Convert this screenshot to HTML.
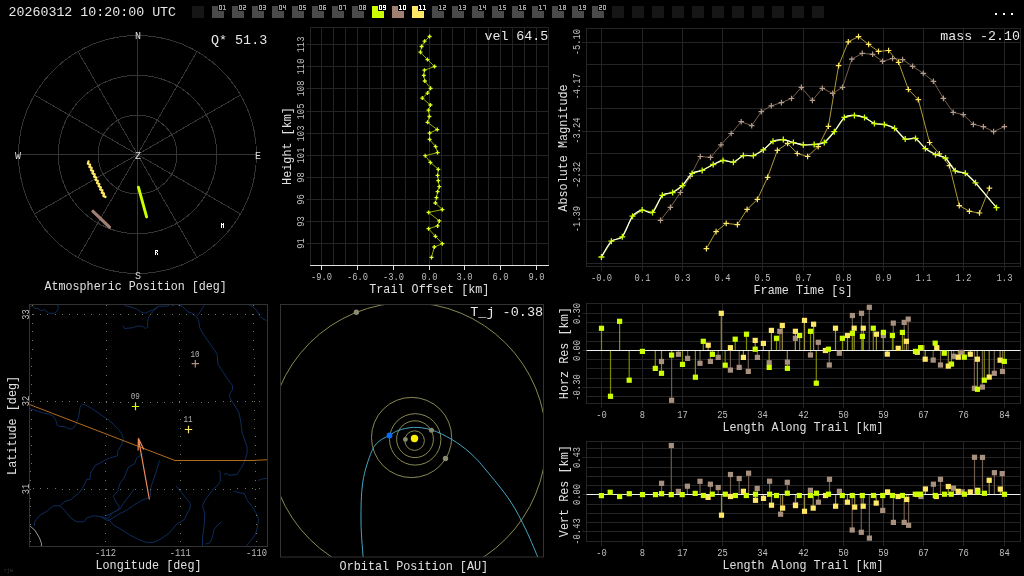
<!DOCTYPE html><html><head><meta charset="utf-8"><style>html,body{margin:0;padding:0;background:#000;overflow:hidden}svg{display:block;will-change:transform}</style></head><body>
<svg width="1024" height="576" viewBox="0 0 1024 576">
<rect width="1024" height="576" fill="#000"/>
<text transform="translate(8.50,16.00)" font-family="Liberation Mono" font-size="13.3" fill="#e8e8e8" text-anchor="start" font-weight="normal" >20260312 10:20:00 UTC</text>
<rect x="192" y="6" width="12" height="12" fill="#161616"/>
<rect x="212" y="6" width="12" height="12" fill="#4a4a4a"/>
<rect x="218" y="4" width="9" height="7" fill="#000"/>
<path d="M219,5h1v1h-1zM220,5h1v1h-1zM221,5h1v1h-1zM219,6h1v1h-1zM221,6h1v1h-1zM219,7h1v1h-1zM221,7h1v1h-1zM219,8h1v1h-1zM221,8h1v1h-1zM219,9h1v1h-1zM220,9h1v1h-1zM221,9h1v1h-1zM223,5h1v1h-1zM224,5h1v1h-1zM224,6h1v1h-1zM224,7h1v1h-1zM224,8h1v1h-1zM223,9h1v1h-1zM224,9h1v1h-1zM225,9h1v1h-1z" fill="#9a9a9a" shape-rendering="crispEdges"/>
<rect x="232" y="6" width="12" height="12" fill="#4a4a4a"/>
<rect x="238" y="4" width="9" height="7" fill="#000"/>
<path d="M239,5h1v1h-1zM240,5h1v1h-1zM241,5h1v1h-1zM239,6h1v1h-1zM241,6h1v1h-1zM239,7h1v1h-1zM241,7h1v1h-1zM239,8h1v1h-1zM241,8h1v1h-1zM239,9h1v1h-1zM240,9h1v1h-1zM241,9h1v1h-1zM243,5h1v1h-1zM244,5h1v1h-1zM245,5h1v1h-1zM245,6h1v1h-1zM243,7h1v1h-1zM244,7h1v1h-1zM245,7h1v1h-1zM243,8h1v1h-1zM243,9h1v1h-1zM244,9h1v1h-1zM245,9h1v1h-1z" fill="#9a9a9a" shape-rendering="crispEdges"/>
<rect x="252" y="6" width="12" height="12" fill="#4a4a4a"/>
<rect x="258" y="4" width="9" height="7" fill="#000"/>
<path d="M259,5h1v1h-1zM260,5h1v1h-1zM261,5h1v1h-1zM259,6h1v1h-1zM261,6h1v1h-1zM259,7h1v1h-1zM261,7h1v1h-1zM259,8h1v1h-1zM261,8h1v1h-1zM259,9h1v1h-1zM260,9h1v1h-1zM261,9h1v1h-1zM263,5h1v1h-1zM264,5h1v1h-1zM265,5h1v1h-1zM265,6h1v1h-1zM263,7h1v1h-1zM264,7h1v1h-1zM265,7h1v1h-1zM265,8h1v1h-1zM263,9h1v1h-1zM264,9h1v1h-1zM265,9h1v1h-1z" fill="#9a9a9a" shape-rendering="crispEdges"/>
<rect x="272" y="6" width="12" height="12" fill="#4a4a4a"/>
<rect x="278" y="4" width="9" height="7" fill="#000"/>
<path d="M279,5h1v1h-1zM280,5h1v1h-1zM281,5h1v1h-1zM279,6h1v1h-1zM281,6h1v1h-1zM279,7h1v1h-1zM281,7h1v1h-1zM279,8h1v1h-1zM281,8h1v1h-1zM279,9h1v1h-1zM280,9h1v1h-1zM281,9h1v1h-1zM283,5h1v1h-1zM285,5h1v1h-1zM283,6h1v1h-1zM285,6h1v1h-1zM283,7h1v1h-1zM284,7h1v1h-1zM285,7h1v1h-1zM285,8h1v1h-1zM285,9h1v1h-1z" fill="#9a9a9a" shape-rendering="crispEdges"/>
<rect x="292" y="6" width="12" height="12" fill="#4a4a4a"/>
<rect x="298" y="4" width="9" height="7" fill="#000"/>
<path d="M299,5h1v1h-1zM300,5h1v1h-1zM301,5h1v1h-1zM299,6h1v1h-1zM301,6h1v1h-1zM299,7h1v1h-1zM301,7h1v1h-1zM299,8h1v1h-1zM301,8h1v1h-1zM299,9h1v1h-1zM300,9h1v1h-1zM301,9h1v1h-1zM303,5h1v1h-1zM304,5h1v1h-1zM305,5h1v1h-1zM303,6h1v1h-1zM303,7h1v1h-1zM304,7h1v1h-1zM305,7h1v1h-1zM305,8h1v1h-1zM303,9h1v1h-1zM304,9h1v1h-1zM305,9h1v1h-1z" fill="#9a9a9a" shape-rendering="crispEdges"/>
<rect x="312" y="6" width="12" height="12" fill="#4a4a4a"/>
<rect x="318" y="4" width="9" height="7" fill="#000"/>
<path d="M319,5h1v1h-1zM320,5h1v1h-1zM321,5h1v1h-1zM319,6h1v1h-1zM321,6h1v1h-1zM319,7h1v1h-1zM321,7h1v1h-1zM319,8h1v1h-1zM321,8h1v1h-1zM319,9h1v1h-1zM320,9h1v1h-1zM321,9h1v1h-1zM323,5h1v1h-1zM324,5h1v1h-1zM325,5h1v1h-1zM323,6h1v1h-1zM323,7h1v1h-1zM324,7h1v1h-1zM325,7h1v1h-1zM323,8h1v1h-1zM325,8h1v1h-1zM323,9h1v1h-1zM324,9h1v1h-1zM325,9h1v1h-1z" fill="#9a9a9a" shape-rendering="crispEdges"/>
<rect x="332" y="6" width="12" height="12" fill="#4a4a4a"/>
<rect x="338" y="4" width="9" height="7" fill="#000"/>
<path d="M339,5h1v1h-1zM340,5h1v1h-1zM341,5h1v1h-1zM339,6h1v1h-1zM341,6h1v1h-1zM339,7h1v1h-1zM341,7h1v1h-1zM339,8h1v1h-1zM341,8h1v1h-1zM339,9h1v1h-1zM340,9h1v1h-1zM341,9h1v1h-1zM343,5h1v1h-1zM344,5h1v1h-1zM345,5h1v1h-1zM345,6h1v1h-1zM345,7h1v1h-1zM345,8h1v1h-1zM345,9h1v1h-1z" fill="#9a9a9a" shape-rendering="crispEdges"/>
<rect x="352" y="6" width="12" height="12" fill="#4a4a4a"/>
<rect x="358" y="4" width="9" height="7" fill="#000"/>
<path d="M359,5h1v1h-1zM360,5h1v1h-1zM361,5h1v1h-1zM359,6h1v1h-1zM361,6h1v1h-1zM359,7h1v1h-1zM361,7h1v1h-1zM359,8h1v1h-1zM361,8h1v1h-1zM359,9h1v1h-1zM360,9h1v1h-1zM361,9h1v1h-1zM363,5h1v1h-1zM364,5h1v1h-1zM365,5h1v1h-1zM363,6h1v1h-1zM365,6h1v1h-1zM363,7h1v1h-1zM364,7h1v1h-1zM365,7h1v1h-1zM363,8h1v1h-1zM365,8h1v1h-1zM363,9h1v1h-1zM364,9h1v1h-1zM365,9h1v1h-1z" fill="#9a9a9a" shape-rendering="crispEdges"/>
<rect x="372" y="6" width="12" height="12" fill="#ccff00"/>
<rect x="378" y="4" width="9" height="7" fill="#000"/>
<path d="M379,5h1v1h-1zM380,5h1v1h-1zM381,5h1v1h-1zM379,6h1v1h-1zM381,6h1v1h-1zM379,7h1v1h-1zM381,7h1v1h-1zM379,8h1v1h-1zM381,8h1v1h-1zM379,9h1v1h-1zM380,9h1v1h-1zM381,9h1v1h-1zM383,5h1v1h-1zM384,5h1v1h-1zM385,5h1v1h-1zM383,6h1v1h-1zM385,6h1v1h-1zM383,7h1v1h-1zM384,7h1v1h-1zM385,7h1v1h-1zM385,8h1v1h-1zM383,9h1v1h-1zM384,9h1v1h-1zM385,9h1v1h-1z" fill="#ffffff" shape-rendering="crispEdges"/>
<rect x="392" y="6" width="12" height="12" fill="#a08070"/>
<rect x="398" y="4" width="9" height="7" fill="#000"/>
<path d="M399,5h1v1h-1zM400,5h1v1h-1zM400,6h1v1h-1zM400,7h1v1h-1zM400,8h1v1h-1zM399,9h1v1h-1zM400,9h1v1h-1zM401,9h1v1h-1zM403,5h1v1h-1zM404,5h1v1h-1zM405,5h1v1h-1zM403,6h1v1h-1zM405,6h1v1h-1zM403,7h1v1h-1zM405,7h1v1h-1zM403,8h1v1h-1zM405,8h1v1h-1zM403,9h1v1h-1zM404,9h1v1h-1zM405,9h1v1h-1z" fill="#ffffff" shape-rendering="crispEdges"/>
<rect x="412" y="6" width="12" height="12" fill="#ffe866"/>
<rect x="418" y="4" width="9" height="7" fill="#000"/>
<path d="M419,5h1v1h-1zM420,5h1v1h-1zM420,6h1v1h-1zM420,7h1v1h-1zM420,8h1v1h-1zM419,9h1v1h-1zM420,9h1v1h-1zM421,9h1v1h-1zM423,5h1v1h-1zM424,5h1v1h-1zM424,6h1v1h-1zM424,7h1v1h-1zM424,8h1v1h-1zM423,9h1v1h-1zM424,9h1v1h-1zM425,9h1v1h-1z" fill="#ffffff" shape-rendering="crispEdges"/>
<rect x="432" y="6" width="12" height="12" fill="#4a4a4a"/>
<rect x="438" y="4" width="9" height="7" fill="#000"/>
<path d="M439,5h1v1h-1zM440,5h1v1h-1zM440,6h1v1h-1zM440,7h1v1h-1zM440,8h1v1h-1zM439,9h1v1h-1zM440,9h1v1h-1zM441,9h1v1h-1zM443,5h1v1h-1zM444,5h1v1h-1zM445,5h1v1h-1zM445,6h1v1h-1zM443,7h1v1h-1zM444,7h1v1h-1zM445,7h1v1h-1zM443,8h1v1h-1zM443,9h1v1h-1zM444,9h1v1h-1zM445,9h1v1h-1z" fill="#9a9a9a" shape-rendering="crispEdges"/>
<rect x="452" y="6" width="12" height="12" fill="#4a4a4a"/>
<rect x="458" y="4" width="9" height="7" fill="#000"/>
<path d="M459,5h1v1h-1zM460,5h1v1h-1zM460,6h1v1h-1zM460,7h1v1h-1zM460,8h1v1h-1zM459,9h1v1h-1zM460,9h1v1h-1zM461,9h1v1h-1zM463,5h1v1h-1zM464,5h1v1h-1zM465,5h1v1h-1zM465,6h1v1h-1zM463,7h1v1h-1zM464,7h1v1h-1zM465,7h1v1h-1zM465,8h1v1h-1zM463,9h1v1h-1zM464,9h1v1h-1zM465,9h1v1h-1z" fill="#9a9a9a" shape-rendering="crispEdges"/>
<rect x="472" y="6" width="12" height="12" fill="#4a4a4a"/>
<rect x="478" y="4" width="9" height="7" fill="#000"/>
<path d="M479,5h1v1h-1zM480,5h1v1h-1zM480,6h1v1h-1zM480,7h1v1h-1zM480,8h1v1h-1zM479,9h1v1h-1zM480,9h1v1h-1zM481,9h1v1h-1zM483,5h1v1h-1zM485,5h1v1h-1zM483,6h1v1h-1zM485,6h1v1h-1zM483,7h1v1h-1zM484,7h1v1h-1zM485,7h1v1h-1zM485,8h1v1h-1zM485,9h1v1h-1z" fill="#9a9a9a" shape-rendering="crispEdges"/>
<rect x="492" y="6" width="12" height="12" fill="#4a4a4a"/>
<rect x="498" y="4" width="9" height="7" fill="#000"/>
<path d="M499,5h1v1h-1zM500,5h1v1h-1zM500,6h1v1h-1zM500,7h1v1h-1zM500,8h1v1h-1zM499,9h1v1h-1zM500,9h1v1h-1zM501,9h1v1h-1zM503,5h1v1h-1zM504,5h1v1h-1zM505,5h1v1h-1zM503,6h1v1h-1zM503,7h1v1h-1zM504,7h1v1h-1zM505,7h1v1h-1zM505,8h1v1h-1zM503,9h1v1h-1zM504,9h1v1h-1zM505,9h1v1h-1z" fill="#9a9a9a" shape-rendering="crispEdges"/>
<rect x="512" y="6" width="12" height="12" fill="#4a4a4a"/>
<rect x="518" y="4" width="9" height="7" fill="#000"/>
<path d="M519,5h1v1h-1zM520,5h1v1h-1zM520,6h1v1h-1zM520,7h1v1h-1zM520,8h1v1h-1zM519,9h1v1h-1zM520,9h1v1h-1zM521,9h1v1h-1zM523,5h1v1h-1zM524,5h1v1h-1zM525,5h1v1h-1zM523,6h1v1h-1zM523,7h1v1h-1zM524,7h1v1h-1zM525,7h1v1h-1zM523,8h1v1h-1zM525,8h1v1h-1zM523,9h1v1h-1zM524,9h1v1h-1zM525,9h1v1h-1z" fill="#9a9a9a" shape-rendering="crispEdges"/>
<rect x="532" y="6" width="12" height="12" fill="#4a4a4a"/>
<rect x="538" y="4" width="9" height="7" fill="#000"/>
<path d="M539,5h1v1h-1zM540,5h1v1h-1zM540,6h1v1h-1zM540,7h1v1h-1zM540,8h1v1h-1zM539,9h1v1h-1zM540,9h1v1h-1zM541,9h1v1h-1zM543,5h1v1h-1zM544,5h1v1h-1zM545,5h1v1h-1zM545,6h1v1h-1zM545,7h1v1h-1zM545,8h1v1h-1zM545,9h1v1h-1z" fill="#9a9a9a" shape-rendering="crispEdges"/>
<rect x="552" y="6" width="12" height="12" fill="#4a4a4a"/>
<rect x="558" y="4" width="9" height="7" fill="#000"/>
<path d="M559,5h1v1h-1zM560,5h1v1h-1zM560,6h1v1h-1zM560,7h1v1h-1zM560,8h1v1h-1zM559,9h1v1h-1zM560,9h1v1h-1zM561,9h1v1h-1zM563,5h1v1h-1zM564,5h1v1h-1zM565,5h1v1h-1zM563,6h1v1h-1zM565,6h1v1h-1zM563,7h1v1h-1zM564,7h1v1h-1zM565,7h1v1h-1zM563,8h1v1h-1zM565,8h1v1h-1zM563,9h1v1h-1zM564,9h1v1h-1zM565,9h1v1h-1z" fill="#9a9a9a" shape-rendering="crispEdges"/>
<rect x="572" y="6" width="12" height="12" fill="#4a4a4a"/>
<rect x="578" y="4" width="9" height="7" fill="#000"/>
<path d="M579,5h1v1h-1zM580,5h1v1h-1zM580,6h1v1h-1zM580,7h1v1h-1zM580,8h1v1h-1zM579,9h1v1h-1zM580,9h1v1h-1zM581,9h1v1h-1zM583,5h1v1h-1zM584,5h1v1h-1zM585,5h1v1h-1zM583,6h1v1h-1zM585,6h1v1h-1zM583,7h1v1h-1zM584,7h1v1h-1zM585,7h1v1h-1zM585,8h1v1h-1zM583,9h1v1h-1zM584,9h1v1h-1zM585,9h1v1h-1z" fill="#9a9a9a" shape-rendering="crispEdges"/>
<rect x="592" y="6" width="12" height="12" fill="#4a4a4a"/>
<rect x="598" y="4" width="9" height="7" fill="#000"/>
<path d="M599,5h1v1h-1zM600,5h1v1h-1zM601,5h1v1h-1zM601,6h1v1h-1zM599,7h1v1h-1zM600,7h1v1h-1zM601,7h1v1h-1zM599,8h1v1h-1zM599,9h1v1h-1zM600,9h1v1h-1zM601,9h1v1h-1zM603,5h1v1h-1zM604,5h1v1h-1zM605,5h1v1h-1zM603,6h1v1h-1zM605,6h1v1h-1zM603,7h1v1h-1zM605,7h1v1h-1zM603,8h1v1h-1zM605,8h1v1h-1zM603,9h1v1h-1zM604,9h1v1h-1zM605,9h1v1h-1z" fill="#9a9a9a" shape-rendering="crispEdges"/>
<rect x="612" y="6" width="12" height="12" fill="#161616"/>
<rect x="632" y="6" width="12" height="12" fill="#161616"/>
<rect x="652" y="6" width="12" height="12" fill="#161616"/>
<rect x="672" y="6" width="12" height="12" fill="#161616"/>
<rect x="692" y="6" width="12" height="12" fill="#161616"/>
<rect x="712" y="6" width="12" height="12" fill="#161616"/>
<rect x="732" y="6" width="12" height="12" fill="#161616"/>
<rect x="752" y="6" width="12" height="12" fill="#161616"/>
<rect x="772" y="6" width="12" height="12" fill="#161616"/>
<rect x="792" y="6" width="12" height="12" fill="#161616"/>
<rect x="812" y="6" width="12" height="12" fill="#161616"/>
<rect x="995" y="13" width="2" height="2" fill="#fff"/>
<rect x="1003" y="13" width="2" height="2" fill="#fff"/>
<rect x="1011" y="13" width="2" height="2" fill="#fff"/>
<circle cx="137.5" cy="154.5" r="39.5" fill="none" stroke="#353535" stroke-width="1" shape-rendering="crispEdges"/>
<circle cx="137.5" cy="154.5" r="79.3" fill="none" stroke="#353535" stroke-width="1" shape-rendering="crispEdges"/>
<circle cx="137.5" cy="154.5" r="119" fill="none" stroke="#353535" stroke-width="1" shape-rendering="crispEdges"/>
<line x1="137.50" y1="154.50" x2="137.50" y2="35.50" stroke="#353535" stroke-width="1" shape-rendering="crispEdges"/>
<line x1="137.50" y1="154.50" x2="197.00" y2="51.44" stroke="#353535" stroke-width="1" shape-rendering="crispEdges"/>
<line x1="137.50" y1="154.50" x2="240.56" y2="95.00" stroke="#353535" stroke-width="1" shape-rendering="crispEdges"/>
<line x1="137.50" y1="154.50" x2="256.50" y2="154.50" stroke="#353535" stroke-width="1" shape-rendering="crispEdges"/>
<line x1="137.50" y1="154.50" x2="240.56" y2="214.00" stroke="#353535" stroke-width="1" shape-rendering="crispEdges"/>
<line x1="137.50" y1="154.50" x2="197.00" y2="257.56" stroke="#353535" stroke-width="1" shape-rendering="crispEdges"/>
<line x1="137.50" y1="154.50" x2="137.50" y2="273.50" stroke="#353535" stroke-width="1" shape-rendering="crispEdges"/>
<line x1="137.50" y1="154.50" x2="78.00" y2="257.56" stroke="#353535" stroke-width="1" shape-rendering="crispEdges"/>
<line x1="137.50" y1="154.50" x2="34.44" y2="214.00" stroke="#353535" stroke-width="1" shape-rendering="crispEdges"/>
<line x1="137.50" y1="154.50" x2="18.50" y2="154.50" stroke="#353535" stroke-width="1" shape-rendering="crispEdges"/>
<line x1="137.50" y1="154.50" x2="34.44" y2="95.00" stroke="#353535" stroke-width="1" shape-rendering="crispEdges"/>
<line x1="137.50" y1="154.50" x2="78.00" y2="51.44" stroke="#353535" stroke-width="1" shape-rendering="crispEdges"/>
<text transform="translate(138.00,39.00) scale(1,1.1)" font-family="Liberation Mono" font-size="10" fill="#dddddd" text-anchor="middle" font-weight="normal" >N</text>
<text transform="translate(138.00,279.00) scale(1,1.1)" font-family="Liberation Mono" font-size="10" fill="#dddddd" text-anchor="middle" font-weight="normal" >S</text>
<text transform="translate(18.00,159.00) scale(1,1.1)" font-family="Liberation Mono" font-size="10" fill="#dddddd" text-anchor="middle" font-weight="normal" >W</text>
<text transform="translate(258.00,159.00) scale(1,1.1)" font-family="Liberation Mono" font-size="10" fill="#dddddd" text-anchor="middle" font-weight="normal" >E</text>
<text transform="translate(138.00,159.00) scale(1,1.1)" font-family="Liberation Mono" font-size="10" fill="#dddddd" text-anchor="middle" font-weight="normal" >Z</text>
<polyline points="88.48,161.48 87.90,163.73 90.02,164.69 89.44,166.95 91.57,167.91 90.99,170.17 93.11,171.13 92.53,173.39 94.66,174.35 94.08,176.61 96.20,177.57 95.62,179.82 97.75,180.78 97.17,183.04 99.29,184.00 98.71,186.26 100.84,187.22 100.26,189.48 102.39,190.44 101.81,192.70 103.93,193.66 103.35,195.92 105.48,196.88" fill="none" stroke="#ffe866" stroke-width="2.4" stroke-linejoin="round" stroke-linecap="round"/>
<line x1="138.40" y1="187.20" x2="146.60" y2="216.90" stroke="#ccff00" stroke-width="2.9" stroke-linecap="round"/>
<line x1="93.00" y1="211.30" x2="109.50" y2="227.20" stroke="#a08070" stroke-width="3.2" stroke-linecap="round"/>
<path d="M221,223h1v1h-1zM223,223h1v1h-1zM221,224h1v1h-1zM222,224h1v1h-1zM223,224h1v1h-1zM221,225h1v1h-1zM223,225h1v1h-1zM221,226h1v1h-1zM223,226h1v1h-1zM221,227h1v1h-1zM223,227h1v1h-1z" fill="#ffffff" shape-rendering="crispEdges"/>
<path d="M155,250h1v1h-1zM156,250h1v1h-1zM157,250h1v1h-1zM155,251h1v1h-1zM157,251h1v1h-1zM155,252h1v1h-1zM156,252h1v1h-1zM155,253h1v1h-1zM157,253h1v1h-1zM155,254h1v1h-1zM157,254h1v1h-1z" fill="#ffffff" shape-rendering="crispEdges"/>
<text transform="translate(267.20,43.70)" font-family="Liberation Mono" font-size="13.4" fill="#e8e8e8" text-anchor="end" font-weight="normal" >Q* 51.3</text>
<text transform="translate(135.70,290.00) scale(1,1.1)" font-family="Liberation Mono" font-size="11.7" fill="#e0e0e0" text-anchor="middle" font-weight="normal" >Atmospheric Position [deg]</text>
<line x1="321.50" y1="27.50" x2="321.50" y2="265.00" stroke="#242424" stroke-width="1" />
<line x1="333.50" y1="27.50" x2="333.50" y2="265.00" stroke="#242424" stroke-width="1" />
<line x1="345.50" y1="27.50" x2="345.50" y2="265.00" stroke="#242424" stroke-width="1" />
<line x1="357.50" y1="27.50" x2="357.50" y2="265.00" stroke="#242424" stroke-width="1" />
<line x1="369.50" y1="27.50" x2="369.50" y2="265.00" stroke="#242424" stroke-width="1" />
<line x1="381.50" y1="27.50" x2="381.50" y2="265.00" stroke="#242424" stroke-width="1" />
<line x1="393.50" y1="27.50" x2="393.50" y2="265.00" stroke="#242424" stroke-width="1" />
<line x1="405.50" y1="27.50" x2="405.50" y2="265.00" stroke="#242424" stroke-width="1" />
<line x1="417.50" y1="27.50" x2="417.50" y2="265.00" stroke="#242424" stroke-width="1" />
<line x1="429.50" y1="27.50" x2="429.50" y2="265.00" stroke="#242424" stroke-width="1" />
<line x1="441.50" y1="27.50" x2="441.50" y2="265.00" stroke="#242424" stroke-width="1" />
<line x1="452.50" y1="27.50" x2="452.50" y2="265.00" stroke="#242424" stroke-width="1" />
<line x1="464.50" y1="27.50" x2="464.50" y2="265.00" stroke="#242424" stroke-width="1" />
<line x1="476.50" y1="27.50" x2="476.50" y2="265.00" stroke="#242424" stroke-width="1" />
<line x1="488.50" y1="27.50" x2="488.50" y2="265.00" stroke="#242424" stroke-width="1" />
<line x1="500.50" y1="27.50" x2="500.50" y2="265.00" stroke="#242424" stroke-width="1" />
<line x1="512.50" y1="27.50" x2="512.50" y2="265.00" stroke="#242424" stroke-width="1" />
<line x1="524.50" y1="27.50" x2="524.50" y2="265.00" stroke="#242424" stroke-width="1" />
<line x1="536.50" y1="27.50" x2="536.50" y2="265.00" stroke="#242424" stroke-width="1" />
<line x1="306.50" y1="44.50" x2="548.50" y2="44.50" stroke="#242424" stroke-width="1" />
<line x1="306.50" y1="66.50" x2="548.50" y2="66.50" stroke="#242424" stroke-width="1" />
<line x1="306.50" y1="88.50" x2="548.50" y2="88.50" stroke="#242424" stroke-width="1" />
<line x1="306.50" y1="111.50" x2="548.50" y2="111.50" stroke="#242424" stroke-width="1" />
<line x1="306.50" y1="133.50" x2="548.50" y2="133.50" stroke="#242424" stroke-width="1" />
<line x1="306.50" y1="155.50" x2="548.50" y2="155.50" stroke="#242424" stroke-width="1" />
<line x1="306.50" y1="177.50" x2="548.50" y2="177.50" stroke="#242424" stroke-width="1" />
<line x1="306.50" y1="199.50" x2="548.50" y2="199.50" stroke="#242424" stroke-width="1" />
<line x1="306.50" y1="221.50" x2="548.50" y2="221.50" stroke="#242424" stroke-width="1" />
<line x1="306.50" y1="243.50" x2="548.50" y2="243.50" stroke="#242424" stroke-width="1" />
<path d="M310.5,265.5 V27.5 H548.5 V265.5" fill="none" stroke="#242424" stroke-width="1"/>
<line x1="310.00" y1="265.50" x2="549.00" y2="265.50" stroke="#e0e0e0" stroke-width="1" />
<line x1="321.50" y1="265.50" x2="321.50" y2="270.00" stroke="#e0e0e0" stroke-width="1" />
<text transform="translate(321.50,280.20) scale(1,1.14)" font-family="Liberation Mono" font-size="8.8" fill="#bdbdbd" text-anchor="middle" font-weight="normal" >-9.0</text>
<line x1="357.50" y1="265.50" x2="357.50" y2="270.00" stroke="#e0e0e0" stroke-width="1" />
<text transform="translate(357.50,280.20) scale(1,1.14)" font-family="Liberation Mono" font-size="8.8" fill="#bdbdbd" text-anchor="middle" font-weight="normal" >-6.0</text>
<line x1="393.50" y1="265.50" x2="393.50" y2="270.00" stroke="#e0e0e0" stroke-width="1" />
<text transform="translate(393.50,280.20) scale(1,1.14)" font-family="Liberation Mono" font-size="8.8" fill="#bdbdbd" text-anchor="middle" font-weight="normal" >-3.0</text>
<line x1="429.50" y1="265.50" x2="429.50" y2="270.00" stroke="#e0e0e0" stroke-width="1" />
<text transform="translate(429.50,280.20) scale(1,1.14)" font-family="Liberation Mono" font-size="8.8" fill="#bdbdbd" text-anchor="middle" font-weight="normal" >0.0</text>
<line x1="464.50" y1="265.50" x2="464.50" y2="270.00" stroke="#e0e0e0" stroke-width="1" />
<text transform="translate(464.50,280.20) scale(1,1.14)" font-family="Liberation Mono" font-size="8.8" fill="#bdbdbd" text-anchor="middle" font-weight="normal" >3.0</text>
<line x1="500.50" y1="265.50" x2="500.50" y2="270.00" stroke="#e0e0e0" stroke-width="1" />
<text transform="translate(500.50,280.20) scale(1,1.14)" font-family="Liberation Mono" font-size="8.8" fill="#bdbdbd" text-anchor="middle" font-weight="normal" >6.0</text>
<line x1="536.50" y1="265.50" x2="536.50" y2="270.00" stroke="#e0e0e0" stroke-width="1" />
<text transform="translate(536.50,280.20) scale(1,1.14)" font-family="Liberation Mono" font-size="8.8" fill="#bdbdbd" text-anchor="middle" font-weight="normal" >9.0</text>
<text transform="translate(304.30,44.50) rotate(-90) scale(1,1.14)" font-family="Liberation Mono" font-size="8.8" fill="#bdbdbd" text-anchor="middle" font-weight="normal" >113</text>
<text transform="translate(304.30,66.50) rotate(-90) scale(1,1.14)" font-family="Liberation Mono" font-size="8.8" fill="#bdbdbd" text-anchor="middle" font-weight="normal" >110</text>
<text transform="translate(304.30,88.50) rotate(-90) scale(1,1.14)" font-family="Liberation Mono" font-size="8.8" fill="#bdbdbd" text-anchor="middle" font-weight="normal" >108</text>
<text transform="translate(304.30,111.50) rotate(-90) scale(1,1.14)" font-family="Liberation Mono" font-size="8.8" fill="#bdbdbd" text-anchor="middle" font-weight="normal" >105</text>
<text transform="translate(304.30,133.50) rotate(-90) scale(1,1.14)" font-family="Liberation Mono" font-size="8.8" fill="#bdbdbd" text-anchor="middle" font-weight="normal" >103</text>
<text transform="translate(304.30,155.50) rotate(-90) scale(1,1.14)" font-family="Liberation Mono" font-size="8.8" fill="#bdbdbd" text-anchor="middle" font-weight="normal" >101</text>
<text transform="translate(304.30,177.50) rotate(-90) scale(1,1.14)" font-family="Liberation Mono" font-size="8.8" fill="#bdbdbd" text-anchor="middle" font-weight="normal" >98</text>
<text transform="translate(304.30,199.50) rotate(-90) scale(1,1.14)" font-family="Liberation Mono" font-size="8.8" fill="#bdbdbd" text-anchor="middle" font-weight="normal" >96</text>
<text transform="translate(304.30,221.50) rotate(-90) scale(1,1.14)" font-family="Liberation Mono" font-size="8.8" fill="#bdbdbd" text-anchor="middle" font-weight="normal" >93</text>
<text transform="translate(304.30,243.50) rotate(-90) scale(1,1.14)" font-family="Liberation Mono" font-size="8.8" fill="#bdbdbd" text-anchor="middle" font-weight="normal" >91</text>
<text transform="translate(291.30,146.00) rotate(-90) scale(1,1.1)" font-family="Liberation Mono" font-size="11.8" fill="#e0e0e0" text-anchor="middle" font-weight="normal" >Height [km]</text>
<text transform="translate(429.30,292.50) scale(1,1.1)" font-family="Liberation Mono" font-size="11.8" fill="#e0e0e0" text-anchor="middle" font-weight="normal" >Trail Offset [km]</text>
<polyline points="429.60,36.50 424.60,41.20 421.60,46.50 420.40,52.20 427.50,59.60 434.60,66.50 424.40,70.20 423.80,75.40 424.80,81.00 430.60,88.30 427.50,93.10 422.30,98.10 430.40,105.00 428.50,110.20 429.40,116.50 427.50,122.30 437.30,129.60 429.60,133.10 429.60,139.40 435.60,146.60 437.60,152.60 425.20,155.70 430.40,162.40 438.30,169.30 437.60,175.40 438.30,180.70 439.30,186.70 437.60,191.70 436.50,197.60 435.40,203.00 442.40,209.60 428.50,212.40 439.30,220.90 437.60,225.90 428.50,228.70 435.40,236.30 442.40,243.70 434.30,247.00 431.50,257.40" fill="none" stroke="#9aa800" stroke-width="1" stroke-linejoin="round" />
<path d="M427.60,36.50H431.60M429.60,34.50V38.50" stroke="#ddff22" stroke-width="1.3"/>
<path d="M422.60,41.20H426.60M424.60,39.20V43.20" stroke="#ddff22" stroke-width="1.3"/>
<path d="M419.60,46.50H423.60M421.60,44.50V48.50" stroke="#ddff22" stroke-width="1.3"/>
<path d="M418.40,52.20H422.40M420.40,50.20V54.20" stroke="#ddff22" stroke-width="1.3"/>
<path d="M425.50,59.60H429.50M427.50,57.60V61.60" stroke="#ddff22" stroke-width="1.3"/>
<path d="M432.60,66.50H436.60M434.60,64.50V68.50" stroke="#ddff22" stroke-width="1.3"/>
<path d="M422.40,70.20H426.40M424.40,68.20V72.20" stroke="#ddff22" stroke-width="1.3"/>
<path d="M421.80,75.40H425.80M423.80,73.40V77.40" stroke="#ddff22" stroke-width="1.3"/>
<path d="M422.80,81.00H426.80M424.80,79.00V83.00" stroke="#ddff22" stroke-width="1.3"/>
<path d="M428.60,88.30H432.60M430.60,86.30V90.30" stroke="#ddff22" stroke-width="1.3"/>
<path d="M425.50,93.10H429.50M427.50,91.10V95.10" stroke="#ddff22" stroke-width="1.3"/>
<path d="M420.30,98.10H424.30M422.30,96.10V100.10" stroke="#ddff22" stroke-width="1.3"/>
<path d="M428.40,105.00H432.40M430.40,103.00V107.00" stroke="#ddff22" stroke-width="1.3"/>
<path d="M426.50,110.20H430.50M428.50,108.20V112.20" stroke="#ddff22" stroke-width="1.3"/>
<path d="M427.40,116.50H431.40M429.40,114.50V118.50" stroke="#ddff22" stroke-width="1.3"/>
<path d="M425.50,122.30H429.50M427.50,120.30V124.30" stroke="#ddff22" stroke-width="1.3"/>
<path d="M435.30,129.60H439.30M437.30,127.60V131.60" stroke="#ddff22" stroke-width="1.3"/>
<path d="M427.60,133.10H431.60M429.60,131.10V135.10" stroke="#ddff22" stroke-width="1.3"/>
<path d="M427.60,139.40H431.60M429.60,137.40V141.40" stroke="#ddff22" stroke-width="1.3"/>
<path d="M433.60,146.60H437.60M435.60,144.60V148.60" stroke="#ddff22" stroke-width="1.3"/>
<path d="M435.60,152.60H439.60M437.60,150.60V154.60" stroke="#ddff22" stroke-width="1.3"/>
<path d="M423.20,155.70H427.20M425.20,153.70V157.70" stroke="#ddff22" stroke-width="1.3"/>
<path d="M428.40,162.40H432.40M430.40,160.40V164.40" stroke="#ddff22" stroke-width="1.3"/>
<path d="M436.30,169.30H440.30M438.30,167.30V171.30" stroke="#ddff22" stroke-width="1.3"/>
<path d="M435.60,175.40H439.60M437.60,173.40V177.40" stroke="#ddff22" stroke-width="1.3"/>
<path d="M436.30,180.70H440.30M438.30,178.70V182.70" stroke="#ddff22" stroke-width="1.3"/>
<path d="M437.30,186.70H441.30M439.30,184.70V188.70" stroke="#ddff22" stroke-width="1.3"/>
<path d="M435.60,191.70H439.60M437.60,189.70V193.70" stroke="#ddff22" stroke-width="1.3"/>
<path d="M434.50,197.60H438.50M436.50,195.60V199.60" stroke="#ddff22" stroke-width="1.3"/>
<path d="M433.40,203.00H437.40M435.40,201.00V205.00" stroke="#ddff22" stroke-width="1.3"/>
<path d="M440.40,209.60H444.40M442.40,207.60V211.60" stroke="#ddff22" stroke-width="1.3"/>
<path d="M426.50,212.40H430.50M428.50,210.40V214.40" stroke="#ddff22" stroke-width="1.3"/>
<path d="M437.30,220.90H441.30M439.30,218.90V222.90" stroke="#ddff22" stroke-width="1.3"/>
<path d="M435.60,225.90H439.60M437.60,223.90V227.90" stroke="#ddff22" stroke-width="1.3"/>
<path d="M426.50,228.70H430.50M428.50,226.70V230.70" stroke="#ddff22" stroke-width="1.3"/>
<path d="M433.40,236.30H437.40M435.40,234.30V238.30" stroke="#ddff22" stroke-width="1.3"/>
<path d="M440.40,243.70H444.40M442.40,241.70V245.70" stroke="#ddff22" stroke-width="1.3"/>
<path d="M432.30,247.00H436.30M434.30,245.00V249.00" stroke="#ddff22" stroke-width="1.3"/>
<path d="M429.50,257.40H433.50M431.50,255.40V259.40" stroke="#ddff22" stroke-width="1.3"/>
<text transform="translate(548.30,40.20)" font-family="Liberation Mono" font-size="13.3" fill="#e8e8e8" text-anchor="end" font-weight="normal" >vel 64.5</text>
<line x1="601.50" y1="28.50" x2="601.50" y2="270.50" stroke="#242424" stroke-width="1" />
<line x1="642.50" y1="28.50" x2="642.50" y2="270.50" stroke="#242424" stroke-width="1" />
<line x1="682.50" y1="28.50" x2="682.50" y2="270.50" stroke="#242424" stroke-width="1" />
<line x1="722.50" y1="28.50" x2="722.50" y2="270.50" stroke="#242424" stroke-width="1" />
<line x1="762.50" y1="28.50" x2="762.50" y2="270.50" stroke="#242424" stroke-width="1" />
<line x1="803.50" y1="28.50" x2="803.50" y2="270.50" stroke="#242424" stroke-width="1" />
<line x1="843.50" y1="28.50" x2="843.50" y2="270.50" stroke="#242424" stroke-width="1" />
<line x1="883.50" y1="28.50" x2="883.50" y2="270.50" stroke="#242424" stroke-width="1" />
<line x1="923.50" y1="28.50" x2="923.50" y2="270.50" stroke="#242424" stroke-width="1" />
<line x1="963.50" y1="28.50" x2="963.50" y2="270.50" stroke="#242424" stroke-width="1" />
<line x1="1004.50" y1="28.50" x2="1004.50" y2="270.50" stroke="#242424" stroke-width="1" />
<line x1="586.50" y1="42.50" x2="1020.50" y2="42.50" stroke="#242424" stroke-width="1" />
<line x1="586.50" y1="64.50" x2="1020.50" y2="64.50" stroke="#242424" stroke-width="1" />
<line x1="586.50" y1="86.50" x2="1020.50" y2="86.50" stroke="#242424" stroke-width="1" />
<line x1="586.50" y1="108.50" x2="1020.50" y2="108.50" stroke="#242424" stroke-width="1" />
<line x1="586.50" y1="131.50" x2="1020.50" y2="131.50" stroke="#242424" stroke-width="1" />
<line x1="586.50" y1="153.50" x2="1020.50" y2="153.50" stroke="#242424" stroke-width="1" />
<line x1="586.50" y1="175.50" x2="1020.50" y2="175.50" stroke="#242424" stroke-width="1" />
<line x1="586.50" y1="197.50" x2="1020.50" y2="197.50" stroke="#242424" stroke-width="1" />
<line x1="586.50" y1="219.50" x2="1020.50" y2="219.50" stroke="#242424" stroke-width="1" />
<line x1="586.50" y1="241.50" x2="1020.50" y2="241.50" stroke="#242424" stroke-width="1" />
<line x1="586.50" y1="263.50" x2="1020.50" y2="263.50" stroke="#242424" stroke-width="1" />
<rect x="586.5" y="28.5" width="434.0" height="238.0" fill="none" stroke="#242424" stroke-width="1"/>
<text transform="translate(601.50,281.20) scale(1,1.14)" font-family="Liberation Mono" font-size="8.8" fill="#bdbdbd" text-anchor="middle" font-weight="normal" >-0.0</text>
<text transform="translate(642.50,281.20) scale(1,1.14)" font-family="Liberation Mono" font-size="8.8" fill="#bdbdbd" text-anchor="middle" font-weight="normal" >0.1</text>
<text transform="translate(682.50,281.20) scale(1,1.14)" font-family="Liberation Mono" font-size="8.8" fill="#bdbdbd" text-anchor="middle" font-weight="normal" >0.3</text>
<text transform="translate(722.50,281.20) scale(1,1.14)" font-family="Liberation Mono" font-size="8.8" fill="#bdbdbd" text-anchor="middle" font-weight="normal" >0.4</text>
<text transform="translate(762.50,281.20) scale(1,1.14)" font-family="Liberation Mono" font-size="8.8" fill="#bdbdbd" text-anchor="middle" font-weight="normal" >0.5</text>
<text transform="translate(803.50,281.20) scale(1,1.14)" font-family="Liberation Mono" font-size="8.8" fill="#bdbdbd" text-anchor="middle" font-weight="normal" >0.7</text>
<text transform="translate(843.50,281.20) scale(1,1.14)" font-family="Liberation Mono" font-size="8.8" fill="#bdbdbd" text-anchor="middle" font-weight="normal" >0.8</text>
<text transform="translate(883.50,281.20) scale(1,1.14)" font-family="Liberation Mono" font-size="8.8" fill="#bdbdbd" text-anchor="middle" font-weight="normal" >0.9</text>
<text transform="translate(923.50,281.20) scale(1,1.14)" font-family="Liberation Mono" font-size="8.8" fill="#bdbdbd" text-anchor="middle" font-weight="normal" >1.1</text>
<text transform="translate(963.50,281.20) scale(1,1.14)" font-family="Liberation Mono" font-size="8.8" fill="#bdbdbd" text-anchor="middle" font-weight="normal" >1.2</text>
<text transform="translate(1004.50,281.20) scale(1,1.14)" font-family="Liberation Mono" font-size="8.8" fill="#bdbdbd" text-anchor="middle" font-weight="normal" >1.3</text>
<line x1="582.00" y1="42.50" x2="586.50" y2="42.50" stroke="#242424" stroke-width="1" />
<text transform="translate(579.70,42.10) rotate(-90) scale(1,1.14)" font-family="Liberation Mono" font-size="8.8" fill="#bdbdbd" text-anchor="middle" font-weight="normal" >-5.10</text>
<line x1="582.00" y1="86.50" x2="586.50" y2="86.50" stroke="#242424" stroke-width="1" />
<text transform="translate(579.70,86.36) rotate(-90) scale(1,1.14)" font-family="Liberation Mono" font-size="8.8" fill="#bdbdbd" text-anchor="middle" font-weight="normal" >-4.17</text>
<line x1="582.00" y1="131.50" x2="586.50" y2="131.50" stroke="#242424" stroke-width="1" />
<text transform="translate(579.70,130.62) rotate(-90) scale(1,1.14)" font-family="Liberation Mono" font-size="8.8" fill="#bdbdbd" text-anchor="middle" font-weight="normal" >-3.24</text>
<line x1="582.00" y1="175.50" x2="586.50" y2="175.50" stroke="#242424" stroke-width="1" />
<text transform="translate(579.70,174.88) rotate(-90) scale(1,1.14)" font-family="Liberation Mono" font-size="8.8" fill="#bdbdbd" text-anchor="middle" font-weight="normal" >-2.32</text>
<line x1="582.00" y1="219.50" x2="586.50" y2="219.50" stroke="#242424" stroke-width="1" />
<text transform="translate(579.70,219.14) rotate(-90) scale(1,1.14)" font-family="Liberation Mono" font-size="8.8" fill="#bdbdbd" text-anchor="middle" font-weight="normal" >-1.39</text>
<text transform="translate(567.00,148.00) rotate(-90) scale(1,1.1)" font-family="Liberation Mono" font-size="11.8" fill="#e0e0e0" text-anchor="middle" font-weight="normal" >Absolute Magnitude</text>
<text transform="translate(803.00,294.00) scale(1,1.1)" font-family="Liberation Mono" font-size="11.8" fill="#e0e0e0" text-anchor="middle" font-weight="normal" >Frame Time [s]</text>
<text transform="translate(1020.00,40.00)" font-family="Liberation Mono" font-size="13.3" fill="#e8e8e8" text-anchor="end" font-weight="normal" >mass -2.10</text>
<polyline points="660.50,220.40 670.40,207.40 680.40,192.50 690.30,176.50 700.30,156.50 710.50,157.40 721.00,144.80 731.20,133.50 741.20,121.70 751.70,125.70 761.30,111.60 771.30,105.80 781.40,102.60 791.50,98.50 801.40,87.40 812.40,100.40 822.30,88.30 832.70,93.40 842.50,87.30 851.80,59.20 862.20,53.40 872.60,54.30 882.50,61.30 892.60,58.50 902.60,59.60 912.60,66.30 923.30,73.40 933.40,81.30 943.40,98.40 953.20,112.40 963.30,114.70 973.40,124.40 983.40,126.70 993.60,131.60 1004.40,126.70" fill="none" stroke="#74604f" stroke-width="1" stroke-linejoin="round" />
<path d="M657.70,220.40H663.30M660.50,217.60V223.20" stroke="#b39b8b" stroke-width="1.2"/>
<path d="M667.60,207.40H673.20M670.40,204.60V210.20" stroke="#b39b8b" stroke-width="1.2"/>
<path d="M677.60,192.50H683.20M680.40,189.70V195.30" stroke="#b39b8b" stroke-width="1.2"/>
<path d="M687.50,176.50H693.10M690.30,173.70V179.30" stroke="#b39b8b" stroke-width="1.2"/>
<path d="M697.50,156.50H703.10M700.30,153.70V159.30" stroke="#b39b8b" stroke-width="1.2"/>
<path d="M707.70,157.40H713.30M710.50,154.60V160.20" stroke="#b39b8b" stroke-width="1.2"/>
<path d="M718.20,144.80H723.80M721.00,142.00V147.60" stroke="#b39b8b" stroke-width="1.2"/>
<path d="M728.40,133.50H734.00M731.20,130.70V136.30" stroke="#b39b8b" stroke-width="1.2"/>
<path d="M738.40,121.70H744.00M741.20,118.90V124.50" stroke="#b39b8b" stroke-width="1.2"/>
<path d="M748.90,125.70H754.50M751.70,122.90V128.50" stroke="#b39b8b" stroke-width="1.2"/>
<path d="M758.50,111.60H764.10M761.30,108.80V114.40" stroke="#b39b8b" stroke-width="1.2"/>
<path d="M768.50,105.80H774.10M771.30,103.00V108.60" stroke="#b39b8b" stroke-width="1.2"/>
<path d="M778.60,102.60H784.20M781.40,99.80V105.40" stroke="#b39b8b" stroke-width="1.2"/>
<path d="M788.70,98.50H794.30M791.50,95.70V101.30" stroke="#b39b8b" stroke-width="1.2"/>
<path d="M798.60,87.40H804.20M801.40,84.60V90.20" stroke="#b39b8b" stroke-width="1.2"/>
<path d="M809.60,100.40H815.20M812.40,97.60V103.20" stroke="#b39b8b" stroke-width="1.2"/>
<path d="M819.50,88.30H825.10M822.30,85.50V91.10" stroke="#b39b8b" stroke-width="1.2"/>
<path d="M829.90,93.40H835.50M832.70,90.60V96.20" stroke="#b39b8b" stroke-width="1.2"/>
<path d="M839.70,87.30H845.30M842.50,84.50V90.10" stroke="#b39b8b" stroke-width="1.2"/>
<path d="M849.00,59.20H854.60M851.80,56.40V62.00" stroke="#b39b8b" stroke-width="1.2"/>
<path d="M859.40,53.40H865.00M862.20,50.60V56.20" stroke="#b39b8b" stroke-width="1.2"/>
<path d="M869.80,54.30H875.40M872.60,51.50V57.10" stroke="#b39b8b" stroke-width="1.2"/>
<path d="M879.70,61.30H885.30M882.50,58.50V64.10" stroke="#b39b8b" stroke-width="1.2"/>
<path d="M889.80,58.50H895.40M892.60,55.70V61.30" stroke="#b39b8b" stroke-width="1.2"/>
<path d="M899.80,59.60H905.40M902.60,56.80V62.40" stroke="#b39b8b" stroke-width="1.2"/>
<path d="M909.80,66.30H915.40M912.60,63.50V69.10" stroke="#b39b8b" stroke-width="1.2"/>
<path d="M920.50,73.40H926.10M923.30,70.60V76.20" stroke="#b39b8b" stroke-width="1.2"/>
<path d="M930.60,81.30H936.20M933.40,78.50V84.10" stroke="#b39b8b" stroke-width="1.2"/>
<path d="M940.60,98.40H946.20M943.40,95.60V101.20" stroke="#b39b8b" stroke-width="1.2"/>
<path d="M950.40,112.40H956.00M953.20,109.60V115.20" stroke="#b39b8b" stroke-width="1.2"/>
<path d="M960.50,114.70H966.10M963.30,111.90V117.50" stroke="#b39b8b" stroke-width="1.2"/>
<path d="M970.60,124.40H976.20M973.40,121.60V127.20" stroke="#b39b8b" stroke-width="1.2"/>
<path d="M980.60,126.70H986.20M983.40,123.90V129.50" stroke="#b39b8b" stroke-width="1.2"/>
<path d="M990.80,131.60H996.40M993.60,128.80V134.40" stroke="#b39b8b" stroke-width="1.2"/>
<path d="M1001.60,126.70H1007.20M1004.40,123.90V129.50" stroke="#b39b8b" stroke-width="1.2"/>
<polyline points="706.40,248.60 716.10,231.60 726.20,223.40 737.40,224.60 747.10,209.40 757.40,199.40 767.60,177.30 777.40,150.40 787.60,143.40 797.30,153.50 807.60,156.50 818.20,146.60 828.40,126.30 838.60,65.60 848.30,41.80 858.50,36.60 868.60,44.40 878.50,51.40 888.60,50.50 898.60,62.30 908.40,89.50 918.30,99.60 929.60,142.50 939.40,153.80 949.40,165.60 959.30,205.60 969.40,211.30 979.50,213.00 989.40,188.20" fill="none" stroke="#ad9a38" stroke-width="1" stroke-linejoin="round" />
<path d="M703.60,248.60H709.20M706.40,245.80V251.40" stroke="#ffe866" stroke-width="1.2"/>
<path d="M713.30,231.60H718.90M716.10,228.80V234.40" stroke="#ffe866" stroke-width="1.2"/>
<path d="M723.40,223.40H729.00M726.20,220.60V226.20" stroke="#ffe866" stroke-width="1.2"/>
<path d="M734.60,224.60H740.20M737.40,221.80V227.40" stroke="#ffe866" stroke-width="1.2"/>
<path d="M744.30,209.40H749.90M747.10,206.60V212.20" stroke="#ffe866" stroke-width="1.2"/>
<path d="M754.60,199.40H760.20M757.40,196.60V202.20" stroke="#ffe866" stroke-width="1.2"/>
<path d="M764.80,177.30H770.40M767.60,174.50V180.10" stroke="#ffe866" stroke-width="1.2"/>
<path d="M774.60,150.40H780.20M777.40,147.60V153.20" stroke="#ffe866" stroke-width="1.2"/>
<path d="M784.80,143.40H790.40M787.60,140.60V146.20" stroke="#ffe866" stroke-width="1.2"/>
<path d="M794.50,153.50H800.10M797.30,150.70V156.30" stroke="#ffe866" stroke-width="1.2"/>
<path d="M804.80,156.50H810.40M807.60,153.70V159.30" stroke="#ffe866" stroke-width="1.2"/>
<path d="M815.40,146.60H821.00M818.20,143.80V149.40" stroke="#ffe866" stroke-width="1.2"/>
<path d="M825.60,126.30H831.20M828.40,123.50V129.10" stroke="#ffe866" stroke-width="1.2"/>
<path d="M835.80,65.60H841.40M838.60,62.80V68.40" stroke="#ffe866" stroke-width="1.2"/>
<path d="M845.50,41.80H851.10M848.30,39.00V44.60" stroke="#ffe866" stroke-width="1.2"/>
<path d="M855.70,36.60H861.30M858.50,33.80V39.40" stroke="#ffe866" stroke-width="1.2"/>
<path d="M865.80,44.40H871.40M868.60,41.60V47.20" stroke="#ffe866" stroke-width="1.2"/>
<path d="M875.70,51.40H881.30M878.50,48.60V54.20" stroke="#ffe866" stroke-width="1.2"/>
<path d="M885.80,50.50H891.40M888.60,47.70V53.30" stroke="#ffe866" stroke-width="1.2"/>
<path d="M895.80,62.30H901.40M898.60,59.50V65.10" stroke="#ffe866" stroke-width="1.2"/>
<path d="M905.60,89.50H911.20M908.40,86.70V92.30" stroke="#ffe866" stroke-width="1.2"/>
<path d="M915.50,99.60H921.10M918.30,96.80V102.40" stroke="#ffe866" stroke-width="1.2"/>
<path d="M926.80,142.50H932.40M929.60,139.70V145.30" stroke="#ffe866" stroke-width="1.2"/>
<path d="M936.60,153.80H942.20M939.40,151.00V156.60" stroke="#ffe866" stroke-width="1.2"/>
<path d="M946.60,165.60H952.20M949.40,162.80V168.40" stroke="#ffe866" stroke-width="1.2"/>
<path d="M956.50,205.60H962.10M959.30,202.80V208.40" stroke="#ffe866" stroke-width="1.2"/>
<path d="M966.60,211.30H972.20M969.40,208.50V214.10" stroke="#ffe866" stroke-width="1.2"/>
<path d="M976.70,213.00H982.30M979.50,210.20V215.80" stroke="#ffe866" stroke-width="1.2"/>
<path d="M986.60,188.20H992.20M989.40,185.40V191.00" stroke="#ffe866" stroke-width="1.2"/>
<polyline points="601.40,257.00 611.40,241.20 622.30,236.80 632.50,216.20 642.20,210.10 652.50,212.40 662.30,195.30 672.60,192.50 682.40,185.60 692.10,173.40 702.20,170.40 713.20,164.50 723.00,160.40 733.40,162.20 743.30,155.60 753.40,155.60 763.30,149.90 773.00,141.30 783.30,139.60 793.40,142.60 803.30,144.80 814.20,144.50 824.30,142.50 834.30,131.70 844.40,117.40 854.40,115.40 864.50,117.40 874.40,123.50 884.40,124.50 894.50,128.30 905.20,139.10 915.50,138.40 925.40,148.60 935.50,154.60 945.50,158.00 955.30,170.80 965.30,173.30 975.50,182.80 996.50,207.70" fill="none" stroke="#a8cc00" stroke-width="1.2" stroke-linejoin="round" />
<path d="M601.40,257.00 C603.07,254.37 607.92,244.57 611.40,241.20 C614.88,237.83 618.78,240.97 622.30,236.80 C625.82,232.63 629.18,220.65 632.50,216.20 C635.82,211.75 638.87,210.73 642.20,210.10 C645.53,209.47 649.15,214.87 652.50,212.40 C655.85,209.93 658.95,198.62 662.30,195.30 C665.65,191.98 669.25,194.12 672.60,192.50 C675.95,190.88 679.15,188.78 682.40,185.60 C685.65,182.42 688.80,175.93 692.10,173.40 C695.40,170.87 698.68,171.88 702.20,170.40 C705.72,168.92 709.73,166.17 713.20,164.50 C716.67,162.83 719.63,160.78 723.00,160.40 C726.37,160.02 730.02,163.00 733.40,162.20 C736.78,161.40 739.97,156.70 743.30,155.60 C746.63,154.50 750.07,156.55 753.40,155.60 C756.73,154.65 760.03,152.28 763.30,149.90 C766.57,147.52 769.67,143.02 773.00,141.30 C776.33,139.58 779.90,139.38 783.30,139.60 C786.70,139.82 790.07,141.73 793.40,142.60 C796.73,143.47 799.83,144.48 803.30,144.80 C806.77,145.12 810.70,144.88 814.20,144.50 C817.70,144.12 820.95,144.63 824.30,142.50 C827.65,140.37 830.95,135.88 834.30,131.70 C837.65,127.52 841.05,120.12 844.40,117.40 C847.75,114.68 851.05,115.40 854.40,115.40 C857.75,115.40 861.17,116.05 864.50,117.40 C867.83,118.75 871.08,122.32 874.40,123.50 C877.72,124.68 881.05,123.70 884.40,124.50 C887.75,125.30 891.03,125.87 894.50,128.30 C897.97,130.73 901.70,137.42 905.20,139.10 C908.70,140.78 912.13,136.82 915.50,138.40 C918.87,139.98 922.07,145.90 925.40,148.60 C928.73,151.30 932.15,153.03 935.50,154.60 C938.85,156.17 942.20,155.30 945.50,158.00 C948.80,160.70 952.00,168.25 955.30,170.80 C958.60,173.35 961.93,171.30 965.30,173.30 C968.67,175.30 970.30,177.07 975.50,182.80 C980.70,188.53 993.00,203.55 996.50,207.70" fill="none" stroke="#ffffff" stroke-width="1.1"/>
<path d="M598.40,257.00H604.40M601.40,254.00V260.00" stroke="#ccff00" stroke-width="1.3"/>
<path d="M608.40,241.20H614.40M611.40,238.20V244.20" stroke="#ccff00" stroke-width="1.3"/>
<path d="M619.30,236.80H625.30M622.30,233.80V239.80" stroke="#ccff00" stroke-width="1.3"/>
<path d="M629.50,216.20H635.50M632.50,213.20V219.20" stroke="#ccff00" stroke-width="1.3"/>
<path d="M639.20,210.10H645.20M642.20,207.10V213.10" stroke="#ccff00" stroke-width="1.3"/>
<path d="M649.50,212.40H655.50M652.50,209.40V215.40" stroke="#ccff00" stroke-width="1.3"/>
<path d="M659.30,195.30H665.30M662.30,192.30V198.30" stroke="#ccff00" stroke-width="1.3"/>
<path d="M669.60,192.50H675.60M672.60,189.50V195.50" stroke="#ccff00" stroke-width="1.3"/>
<path d="M679.40,185.60H685.40M682.40,182.60V188.60" stroke="#ccff00" stroke-width="1.3"/>
<path d="M689.10,173.40H695.10M692.10,170.40V176.40" stroke="#ccff00" stroke-width="1.3"/>
<path d="M699.20,170.40H705.20M702.20,167.40V173.40" stroke="#ccff00" stroke-width="1.3"/>
<path d="M710.20,164.50H716.20M713.20,161.50V167.50" stroke="#ccff00" stroke-width="1.3"/>
<path d="M720.00,160.40H726.00M723.00,157.40V163.40" stroke="#ccff00" stroke-width="1.3"/>
<path d="M730.40,162.20H736.40M733.40,159.20V165.20" stroke="#ccff00" stroke-width="1.3"/>
<path d="M740.30,155.60H746.30M743.30,152.60V158.60" stroke="#ccff00" stroke-width="1.3"/>
<path d="M750.40,155.60H756.40M753.40,152.60V158.60" stroke="#ccff00" stroke-width="1.3"/>
<path d="M760.30,149.90H766.30M763.30,146.90V152.90" stroke="#ccff00" stroke-width="1.3"/>
<path d="M770.00,141.30H776.00M773.00,138.30V144.30" stroke="#ccff00" stroke-width="1.3"/>
<path d="M780.30,139.60H786.30M783.30,136.60V142.60" stroke="#ccff00" stroke-width="1.3"/>
<path d="M790.40,142.60H796.40M793.40,139.60V145.60" stroke="#ccff00" stroke-width="1.3"/>
<path d="M800.30,144.80H806.30M803.30,141.80V147.80" stroke="#ccff00" stroke-width="1.3"/>
<path d="M811.20,144.50H817.20M814.20,141.50V147.50" stroke="#ccff00" stroke-width="1.3"/>
<path d="M821.30,142.50H827.30M824.30,139.50V145.50" stroke="#ccff00" stroke-width="1.3"/>
<path d="M831.30,131.70H837.30M834.30,128.70V134.70" stroke="#ccff00" stroke-width="1.3"/>
<path d="M841.40,117.40H847.40M844.40,114.40V120.40" stroke="#ccff00" stroke-width="1.3"/>
<path d="M851.40,115.40H857.40M854.40,112.40V118.40" stroke="#ccff00" stroke-width="1.3"/>
<path d="M861.50,117.40H867.50M864.50,114.40V120.40" stroke="#ccff00" stroke-width="1.3"/>
<path d="M871.40,123.50H877.40M874.40,120.50V126.50" stroke="#ccff00" stroke-width="1.3"/>
<path d="M881.40,124.50H887.40M884.40,121.50V127.50" stroke="#ccff00" stroke-width="1.3"/>
<path d="M891.50,128.30H897.50M894.50,125.30V131.30" stroke="#ccff00" stroke-width="1.3"/>
<path d="M902.20,139.10H908.20M905.20,136.10V142.10" stroke="#ccff00" stroke-width="1.3"/>
<path d="M912.50,138.40H918.50M915.50,135.40V141.40" stroke="#ccff00" stroke-width="1.3"/>
<path d="M922.40,148.60H928.40M925.40,145.60V151.60" stroke="#ccff00" stroke-width="1.3"/>
<path d="M932.50,154.60H938.50M935.50,151.60V157.60" stroke="#ccff00" stroke-width="1.3"/>
<path d="M942.50,158.00H948.50M945.50,155.00V161.00" stroke="#ccff00" stroke-width="1.3"/>
<path d="M952.30,170.80H958.30M955.30,167.80V173.80" stroke="#ccff00" stroke-width="1.3"/>
<path d="M962.30,173.30H968.30M965.30,170.30V176.30" stroke="#ccff00" stroke-width="1.3"/>
<path d="M972.50,182.80H978.50M975.50,179.80V185.80" stroke="#ccff00" stroke-width="1.3"/>
<path d="M993.50,207.70H999.50M996.50,204.70V210.70" stroke="#ccff00" stroke-width="1.3"/>
<defs><clipPath id="mapclip"><rect x="29.5" y="304.5" width="238.0" height="242.0"/></clipPath><clipPath id="orbclip"><rect x="280.5" y="304.5" width="263" height="252.5"/></clipPath></defs>
<g clip-path="url(#mapclip)">
<polyline points="30.10,306.90 32.20,305.60 34.90,308.30 38.40,308.60 39.80,310.40 42.60,310.40 44.40,309.40 48.80,313.20 53.70,313.50 57.20,311.10 58.60,307.60 57.20,304.50" fill="none" stroke="#0e2c5c" stroke-width="1" stroke-linejoin="round" />
<polyline points="124.00,304.50 126.75,306.25 130.90,306.90 136.50,309.00 141.30,312.20 144.40,313.20 148.30,311.80 153.80,309.40 158.70,306.25 166.30,306.25 169.10,305.30" fill="none" stroke="#0e2c5c" stroke-width="1" stroke-linejoin="round" />
<polyline points="171.20,305.30 174.00,305.30" fill="none" stroke="#0e2c5c" stroke-width="1" stroke-linejoin="round" />
<polyline points="158.00,306.90 152.40,311.80 149.70,315.30 148.30,318.10 147.60,322.20 147.60,327.10 145.50,328.50 142.70,326.40 137.20,326.10 132.30,327.80 124.70,328.50 122.60,325.70" fill="none" stroke="#0e2c5c" stroke-width="1" stroke-linejoin="round" />
<polyline points="178.10,305.30 182.30,306.25 185.10,309.00 188.00,312.00 190.80,312.50 195.00,315.30 198.40,319.50 199.10,323.60 199.80,327.80 201.90,332.00 207.50,340.30 214.40,350.00 217.20,354.20 217.90,363.90 221.40,369.50 228.30,380.00 232.50,385.60 232.50,389.70 229.70,393.90 229.70,397.40 232.50,402.20 238.70,412.00 240.80,421.70 242.20,432.80 247.10,446.70 247.10,453.70 244.50,461.50 241.40,467.60 236.90,474.50 229.20,475.30 226.90,473.40 223.90,474.50" fill="none" stroke="#0e2c5c" stroke-width="1" stroke-linejoin="round" />
<polyline points="197.00,316.00 201.20,310.40 202.60,307.60 204.70,305.60" fill="none" stroke="#0e2c5c" stroke-width="1" stroke-linejoin="round" />
<polyline points="249.20,305.30 252.60,306.30 256.80,310.40 260.30,316.70 263.00,318.80 266.50,320.60" fill="none" stroke="#0e2c5c" stroke-width="1" stroke-linejoin="round" />
<polyline points="29.70,408.50 33.60,409.90 41.90,412.60 48.80,414.00 53.00,416.10 55.80,420.30 57.20,425.10 59.90,426.50 64.10,426.50 68.30,428.60 72.40,428.90 75.90,424.40 78.70,416.80 80.10,407.10 82.20,404.30 85.00,404.70 91.90,408.50 98.80,413.30 108.00,419.60 113.60,424.40 118.40,429.30 121.90,434.20 123.30,438.30 121.90,443.90 117.70,451.50 117.70,455.70 108.00,458.50 99.80,463.10 95.20,465.30 90.60,473.00 89.80,479.80 86.80,479.10 83.70,486.00 79.90,492.10 70.70,499.70 63.90,502.00 60.10,505.80 53.20,505.80 47.10,511.10 40.20,515.00 34.90,521.10 34.10,526.40" fill="none" stroke="#0e2c5c" stroke-width="1" stroke-linejoin="round" />
<polyline points="60.10,505.80 65.40,511.10 70.70,518.00 76.90,521.80 83.70,521.80 86.80,518.00 93.60,515.70 100.50,516.50 108.00,518.80 114.10,525.60 120.20,528.70 129.40,534.80 138.50,539.40 146.20,542.40 153.80,542.40 159.90,539.40 169.10,533.30 176.70,524.10 184.30,519.50 188.00,511.90 190.30,507.30 190.30,503.50 188.00,500.50 181.30,492.10 175.90,486.00" fill="none" stroke="#0e2c5c" stroke-width="1" stroke-linejoin="round" />
<polyline points="143.20,453.40 136.70,458.00 134.70,463.80 128.60,466.90 126.30,472.20 124.00,478.30 120.20,482.90 117.90,490.50 113.30,496.60 115.60,501.20 119.50,507.30 117.20,510.40 108.00,515.00 105.90,515.70" fill="none" stroke="#0e2c5c" stroke-width="1" stroke-linejoin="round" />
<polyline points="134.00,489.00 130.90,493.60 123.30,503.50 120.20,508.90 112.60,512.70 108.00,518.00" fill="none" stroke="#0e2c5c" stroke-width="1" stroke-linejoin="round" />
<polyline points="159.50,460.60 156.20,471.60 152.30,482.90 151.00,487.20 150.40,492.50 150.70,496.60 149.20,497.40 141.60,500.50 134.00,505.00 126.30,510.40 117.20,515.00 108.00,521.00 100.50,516.50" fill="none" stroke="#0e2c5c" stroke-width="1" stroke-linejoin="round" />
<polyline points="218.50,469.90 220.10,472.20 220.40,481.40 217.00,486.00 213.20,489.00 209.40,494.40 204.80,500.50 202.50,505.80 204.80,513.40 204.00,527.20 202.50,537.90 202.50,547.00" fill="none" stroke="#0e2c5c" stroke-width="1" stroke-linejoin="round" />
<polyline points="233.80,491.30 239.90,492.80 244.50,493.60 246.80,499.70 252.10,506.60 255.90,512.70 258.50,518.80 257.50,527.20 255.20,534.80 250.60,540.90 245.30,547.00" fill="none" stroke="#0e2c5c" stroke-width="1" stroke-linejoin="round" />
<polyline points="221.60,521.80 217.80,524.90 214.00,529.50 212.40,537.90 209.40,543.20 205.60,544.00" fill="none" stroke="#0e2c5c" stroke-width="1" stroke-linejoin="round" />
<polyline points="258.20,480.60 261.30,479.10 266.60,478.30" fill="none" stroke="#0e2c5c" stroke-width="1" stroke-linejoin="round" />
<polyline points="29.00,404.30 175.00,460.50 253.00,460.50 268.00,459.70" fill="none" stroke="#b06c1c" stroke-width="1" stroke-linejoin="round" />
<polyline points="29.50,525.60 34.90,530.20 39.50,537.90 41.40,543.20 41.40,547.00" fill="none" stroke="#9a9a9a" stroke-width="1" stroke-linejoin="round" />
</g>
<path d="M33,314h1v1h-1zM40,314h1v1h-1zM47,314h1v1h-1zM55,314h1v1h-1zM62,314h1v1h-1zM69,314h1v1h-1zM77,314h1v1h-1zM84,314h1v1h-1zM91,314h1v1h-1zM99,314h1v1h-1zM106,314h1v1h-1zM113,314h1v1h-1zM120,314h1v1h-1zM128,314h1v1h-1zM135,314h1v1h-1zM142,314h1v1h-1zM150,314h1v1h-1zM157,314h1v1h-1zM164,314h1v1h-1zM172,314h1v1h-1zM179,314h1v1h-1zM186,314h1v1h-1zM193,314h1v1h-1zM201,314h1v1h-1zM208,314h1v1h-1zM215,314h1v1h-1zM223,314h1v1h-1zM230,314h1v1h-1zM237,314h1v1h-1zM245,314h1v1h-1zM252,314h1v1h-1zM259,314h1v1h-1zM33,401h1v1h-1zM40,401h1v1h-1zM47,401h1v1h-1zM55,401h1v1h-1zM62,401h1v1h-1zM69,401h1v1h-1zM77,401h1v1h-1zM84,402h1v1h-1zM91,402h1v1h-1zM99,402h1v1h-1zM106,402h1v1h-1zM113,402h1v1h-1zM120,402h1v1h-1zM128,402h1v1h-1zM135,402h1v1h-1zM142,402h1v1h-1zM150,402h1v1h-1zM157,402h1v1h-1zM164,402h1v1h-1zM172,402h1v1h-1zM179,402h1v1h-1zM186,402h1v1h-1zM193,402h1v1h-1zM201,402h1v1h-1zM208,402h1v1h-1zM215,401h1v1h-1zM223,401h1v1h-1zM230,401h1v1h-1zM237,401h1v1h-1zM245,401h1v1h-1zM252,401h1v1h-1zM259,401h1v1h-1zM33,488h1v1h-1zM40,488h1v1h-1zM47,488h1v1h-1zM55,488h1v1h-1zM62,489h1v1h-1zM69,489h1v1h-1zM77,489h1v1h-1zM84,489h1v1h-1zM91,489h1v1h-1zM99,489h1v1h-1zM106,489h1v1h-1zM113,489h1v1h-1zM120,489h1v1h-1zM128,489h1v1h-1zM135,489h1v1h-1zM142,489h1v1h-1zM150,489h1v1h-1zM157,489h1v1h-1zM164,489h1v1h-1zM172,489h1v1h-1zM179,489h1v1h-1zM186,489h1v1h-1zM193,489h1v1h-1zM201,489h1v1h-1zM208,489h1v1h-1zM215,489h1v1h-1zM223,489h1v1h-1zM230,489h1v1h-1zM237,488h1v1h-1zM245,488h1v1h-1zM252,488h1v1h-1zM259,488h1v1h-1zM32,305h1v1h-1zM32,314h1v1h-1zM32,323h1v1h-1zM32,331h1v1h-1zM32,340h1v1h-1zM32,349h1v1h-1zM31,358h1v1h-1zM31,366h1v1h-1zM31,375h1v1h-1zM31,384h1v1h-1zM31,393h1v1h-1zM31,401h1v1h-1zM31,410h1v1h-1zM31,419h1v1h-1zM31,428h1v1h-1zM31,436h1v1h-1zM31,445h1v1h-1zM31,454h1v1h-1zM31,463h1v1h-1zM30,471h1v1h-1zM30,480h1v1h-1zM30,489h1v1h-1zM30,498h1v1h-1zM30,506h1v1h-1zM30,515h1v1h-1zM30,524h1v1h-1zM30,533h1v1h-1zM30,541h1v1h-1zM106,305h1v1h-1zM106,314h1v1h-1zM106,323h1v1h-1zM106,331h1v1h-1zM106,340h1v1h-1zM106,349h1v1h-1zM106,358h1v1h-1zM106,366h1v1h-1zM106,375h1v1h-1zM106,384h1v1h-1zM106,393h1v1h-1zM106,401h1v1h-1zM106,410h1v1h-1zM106,419h1v1h-1zM106,428h1v1h-1zM106,436h1v1h-1zM105,445h1v1h-1zM105,454h1v1h-1zM105,463h1v1h-1zM105,471h1v1h-1zM105,480h1v1h-1zM105,489h1v1h-1zM105,498h1v1h-1zM105,506h1v1h-1zM105,515h1v1h-1zM105,524h1v1h-1zM105,533h1v1h-1zM105,541h1v1h-1zM179,305h1v1h-1zM179,314h1v1h-1zM179,323h1v1h-1zM179,331h1v1h-1zM179,340h1v1h-1zM179,349h1v1h-1zM179,358h1v1h-1zM179,366h1v1h-1zM179,375h1v1h-1zM179,384h1v1h-1zM179,393h1v1h-1zM179,401h1v1h-1zM179,410h1v1h-1zM180,419h1v1h-1zM180,428h1v1h-1zM180,436h1v1h-1zM180,445h1v1h-1zM180,454h1v1h-1zM180,463h1v1h-1zM180,471h1v1h-1zM180,480h1v1h-1zM180,489h1v1h-1zM180,498h1v1h-1zM180,506h1v1h-1zM180,515h1v1h-1zM180,524h1v1h-1zM180,533h1v1h-1zM180,541h1v1h-1zM253,305h1v1h-1zM253,314h1v1h-1zM253,323h1v1h-1zM253,331h1v1h-1zM253,340h1v1h-1zM253,349h1v1h-1zM254,358h1v1h-1zM254,366h1v1h-1zM254,375h1v1h-1zM254,384h1v1h-1zM254,393h1v1h-1zM254,401h1v1h-1zM254,410h1v1h-1zM254,419h1v1h-1zM254,428h1v1h-1zM255,436h1v1h-1zM255,445h1v1h-1zM255,454h1v1h-1zM255,463h1v1h-1zM255,471h1v1h-1zM255,480h1v1h-1zM255,489h1v1h-1zM255,498h1v1h-1zM255,506h1v1h-1zM256,515h1v1h-1zM256,524h1v1h-1zM256,533h1v1h-1zM256,541h1v1h-1z" fill="#6e7c5e" shape-rendering="crispEdges"/>
<rect x="29.5" y="304.5" width="238.0" height="242.0" fill="none" stroke="#333333" stroke-width="1"/>
<text transform="translate(28.50,314.40) rotate(-90) scale(1,1.14)" font-family="Liberation Mono" font-size="8.8" fill="#bdbdbd" text-anchor="middle" font-weight="normal" >33</text>
<text transform="translate(28.50,401.00) rotate(-90) scale(1,1.14)" font-family="Liberation Mono" font-size="8.8" fill="#bdbdbd" text-anchor="middle" font-weight="normal" >32</text>
<text transform="translate(28.50,489.00) rotate(-90) scale(1,1.14)" font-family="Liberation Mono" font-size="8.8" fill="#bdbdbd" text-anchor="middle" font-weight="normal" >31</text>
<text transform="translate(105.60,556.00) scale(1,1.14)" font-family="Liberation Mono" font-size="8.8" fill="#bdbdbd" text-anchor="middle" font-weight="normal" >-112</text>
<text transform="translate(180.30,556.00) scale(1,1.14)" font-family="Liberation Mono" font-size="8.8" fill="#bdbdbd" text-anchor="middle" font-weight="normal" >-111</text>
<text transform="translate(256.50,556.00) scale(1,1.14)" font-family="Liberation Mono" font-size="8.8" fill="#bdbdbd" text-anchor="middle" font-weight="normal" >-110</text>
<text transform="translate(16.00,425.40) rotate(-90) scale(1,1.1)" font-family="Liberation Mono" font-size="11.8" fill="#e0e0e0" text-anchor="middle" font-weight="normal" >Latitude [deg]</text>
<text transform="translate(148.50,569.00) scale(1,1.1)" font-family="Liberation Mono" font-size="11.8" fill="#e0e0e0" text-anchor="middle" font-weight="normal" >Longitude [deg]</text>
<path d="M131.80,406.50H139.20M135.50,402.80V410.20" stroke="#ccff00" stroke-width="1.2"/>
<text transform="translate(135.20,398.90) scale(1,1.1)" font-family="Liberation Mono" font-size="7.6" fill="#b0b0b0" text-anchor="middle" font-weight="normal" >09</text>
<path d="M191.60,363.70H199.00M195.30,360.00V367.40" stroke="#b09080" stroke-width="1.2"/>
<text transform="translate(195.00,356.50) scale(1,1.1)" font-family="Liberation Mono" font-size="7.6" fill="#b0b0b0" text-anchor="middle" font-weight="normal" >10</text>
<path d="M184.80,429.50H192.20M188.50,425.80V433.20" stroke="#ffe866" stroke-width="1.2"/>
<text transform="translate(188.00,422.20) scale(1,1.1)" font-family="Liberation Mono" font-size="7.6" fill="#b0b0b0" text-anchor="middle" font-weight="normal" >11</text>
<path d="M149.4,499.5 L138.4,438.3 M138.1,450.5 L138.4,438.3 L143.8,449.5" fill="none" stroke="#f08a58" stroke-width="1.2"/>
<text transform="translate(4.00,572.00)" font-family="Liberation Mono" font-size="5" fill="#3a3a3a" text-anchor="start" font-weight="normal" >rjw</text>
<g clip-path="url(#orbclip)">
<circle cx="407.6" cy="441.1" r="138.6" fill="none" stroke="#8a8852" stroke-width="1"/>
<circle cx="411.6" cy="437.5" r="40.1" fill="none" stroke="#8a8852" stroke-width="1"/>
<circle cx="415.2" cy="439.4" r="25.7" fill="none" stroke="#8a8852" stroke-width="1"/>
<circle cx="415" cy="439.2" r="18.4" fill="none" stroke="#8a8852" stroke-width="1"/>
<circle cx="414.6" cy="440.6" r="9.8" fill="none" stroke="#8a8852" stroke-width="1"/>
<path d="M363.50,562.00 C363.08,555.33 361.12,535.33 361.00,522.00 C360.88,508.67 361.05,493.70 362.80,482.00 C364.55,470.30 368.78,458.58 371.50,451.80 C374.22,445.02 376.18,444.00 379.10,441.30 C382.02,438.60 385.82,437.40 389.00,435.60 C392.18,433.80 394.12,431.87 398.20,430.50 C402.28,429.13 407.93,427.50 413.50,427.40 C419.07,427.30 425.23,427.90 431.60,429.90 C437.97,431.90 445.30,435.58 451.70,439.40 C458.10,443.22 464.28,447.70 470.00,452.80 C475.72,457.90 479.30,461.97 486.00,470.00 C492.70,478.03 503.53,491.00 510.20,501.00 C516.87,511.00 521.20,520.17 526.00,530.00 C530.80,539.83 536.83,555.00 539.00,560.00" fill="none" stroke="#46a4c0" stroke-width="1"/>
</g>
<rect x="280.5" y="304.5" width="263" height="252.5" fill="none" stroke="#333" stroke-width="1"/>
<circle cx="414.5" cy="438.5" r="3.7" fill="#ffee00"/>
<circle cx="405.4" cy="439.4" r="2.4" fill="#8a8a6e"/>
<circle cx="431.5" cy="430.3" r="2.5" fill="#8a8a6e"/>
<circle cx="445.5" cy="458.5" r="2.7" fill="#8a8a6e"/>
<circle cx="356.4" cy="312.2" r="2.7" fill="#8a8a6e"/>
<circle cx="389.5" cy="435.5" r="2.9" fill="#0a6cff"/>
<text transform="translate(543.10,316.10)" font-family="Liberation Mono" font-size="13.5" fill="#e8e8e8" text-anchor="end" font-weight="normal" >T_j -0.38</text>
<text transform="translate(413.90,569.50) scale(1,1.1)" font-family="Liberation Mono" font-size="11.8" fill="#e0e0e0" text-anchor="middle" font-weight="normal" >Orbital Position [AU]</text>
<line x1="601.50" y1="303.50" x2="601.50" y2="408.00" stroke="#242424" stroke-width="1" />
<line x1="642.50" y1="303.50" x2="642.50" y2="408.00" stroke="#242424" stroke-width="1" />
<line x1="682.50" y1="303.50" x2="682.50" y2="408.00" stroke="#242424" stroke-width="1" />
<line x1="722.50" y1="303.50" x2="722.50" y2="408.00" stroke="#242424" stroke-width="1" />
<line x1="762.50" y1="303.50" x2="762.50" y2="408.00" stroke="#242424" stroke-width="1" />
<line x1="803.50" y1="303.50" x2="803.50" y2="408.00" stroke="#242424" stroke-width="1" />
<line x1="843.50" y1="303.50" x2="843.50" y2="408.00" stroke="#242424" stroke-width="1" />
<line x1="883.50" y1="303.50" x2="883.50" y2="408.00" stroke="#242424" stroke-width="1" />
<line x1="923.50" y1="303.50" x2="923.50" y2="408.00" stroke="#242424" stroke-width="1" />
<line x1="963.50" y1="303.50" x2="963.50" y2="408.00" stroke="#242424" stroke-width="1" />
<line x1="1004.50" y1="303.50" x2="1004.50" y2="408.00" stroke="#242424" stroke-width="1" />
<line x1="586.50" y1="313.50" x2="1020.50" y2="313.50" stroke="#242424" stroke-width="1" />
<line x1="586.50" y1="322.50" x2="1020.50" y2="322.50" stroke="#242424" stroke-width="1" />
<line x1="586.50" y1="332.50" x2="1020.50" y2="332.50" stroke="#242424" stroke-width="1" />
<line x1="586.50" y1="341.50" x2="1020.50" y2="341.50" stroke="#242424" stroke-width="1" />
<line x1="586.50" y1="350.50" x2="1020.50" y2="350.50" stroke="#242424" stroke-width="1" />
<line x1="586.50" y1="359.50" x2="1020.50" y2="359.50" stroke="#242424" stroke-width="1" />
<line x1="586.50" y1="368.50" x2="1020.50" y2="368.50" stroke="#242424" stroke-width="1" />
<line x1="586.50" y1="378.50" x2="1020.50" y2="378.50" stroke="#242424" stroke-width="1" />
<line x1="586.50" y1="387.50" x2="1020.50" y2="387.50" stroke="#242424" stroke-width="1" />
<line x1="586.50" y1="396.50" x2="1020.50" y2="396.50" stroke="#242424" stroke-width="1" />
<rect x="586.5" y="303.5" width="434.0" height="100.0" fill="none" stroke="#242424" stroke-width="1"/>
<line x1="582.50" y1="313.50" x2="586.50" y2="313.50" stroke="#242424" stroke-width="1" />
<text transform="translate(580.30,313.50) rotate(-90) scale(1,1.14)" font-family="Liberation Mono" font-size="8.8" fill="#bdbdbd" text-anchor="middle" font-weight="normal" >0.30</text>
<line x1="582.50" y1="350.50" x2="586.50" y2="350.50" stroke="#242424" stroke-width="1" />
<text transform="translate(580.30,350.50) rotate(-90) scale(1,1.14)" font-family="Liberation Mono" font-size="8.8" fill="#bdbdbd" text-anchor="middle" font-weight="normal" >0.00</text>
<line x1="582.50" y1="387.50" x2="586.50" y2="387.50" stroke="#242424" stroke-width="1" />
<text transform="translate(580.30,387.50) rotate(-90) scale(1,1.14)" font-family="Liberation Mono" font-size="8.8" fill="#bdbdbd" text-anchor="middle" font-weight="normal" >-0.30</text>
<text transform="translate(568.30,353.20) rotate(-90) scale(1,1.1)" font-family="Liberation Mono" font-size="11.8" fill="#e0e0e0" text-anchor="middle" font-weight="normal" >Horz Res [km]</text>
<text transform="translate(601.50,418.10) scale(1,1.14)" font-family="Liberation Mono" font-size="8.8" fill="#bdbdbd" text-anchor="middle" font-weight="normal" >-0</text>
<text transform="translate(642.50,418.10) scale(1,1.14)" font-family="Liberation Mono" font-size="8.8" fill="#bdbdbd" text-anchor="middle" font-weight="normal" >8</text>
<text transform="translate(682.50,418.10) scale(1,1.14)" font-family="Liberation Mono" font-size="8.8" fill="#bdbdbd" text-anchor="middle" font-weight="normal" >17</text>
<text transform="translate(722.50,418.10) scale(1,1.14)" font-family="Liberation Mono" font-size="8.8" fill="#bdbdbd" text-anchor="middle" font-weight="normal" >25</text>
<text transform="translate(762.50,418.10) scale(1,1.14)" font-family="Liberation Mono" font-size="8.8" fill="#bdbdbd" text-anchor="middle" font-weight="normal" >34</text>
<text transform="translate(803.50,418.10) scale(1,1.14)" font-family="Liberation Mono" font-size="8.8" fill="#bdbdbd" text-anchor="middle" font-weight="normal" >42</text>
<text transform="translate(843.50,418.10) scale(1,1.14)" font-family="Liberation Mono" font-size="8.8" fill="#bdbdbd" text-anchor="middle" font-weight="normal" >50</text>
<text transform="translate(883.50,418.10) scale(1,1.14)" font-family="Liberation Mono" font-size="8.8" fill="#bdbdbd" text-anchor="middle" font-weight="normal" >59</text>
<text transform="translate(923.50,418.10) scale(1,1.14)" font-family="Liberation Mono" font-size="8.8" fill="#bdbdbd" text-anchor="middle" font-weight="normal" >67</text>
<text transform="translate(963.50,418.10) scale(1,1.14)" font-family="Liberation Mono" font-size="8.8" fill="#bdbdbd" text-anchor="middle" font-weight="normal" >76</text>
<text transform="translate(1004.50,418.10) scale(1,1.14)" font-family="Liberation Mono" font-size="8.8" fill="#bdbdbd" text-anchor="middle" font-weight="normal" >84</text>
<text transform="translate(803.00,431.00) scale(1,1.1)" font-family="Liberation Mono" font-size="11.7" fill="#e0e0e0" text-anchor="middle" font-weight="normal" >Length Along Trail [km]</text>
<line x1="661.50" y1="350.50" x2="661.50" y2="361.50" stroke="#6e5a4c" stroke-width="1.2" />
<line x1="671.60" y1="350.50" x2="671.60" y2="400.30" stroke="#6e5a4c" stroke-width="1.2" />
<line x1="678.50" y1="350.50" x2="678.50" y2="354.30" stroke="#6e5a4c" stroke-width="1.2" />
<line x1="687.60" y1="350.50" x2="687.60" y2="358.40" stroke="#6e5a4c" stroke-width="1.2" />
<line x1="700.00" y1="350.50" x2="700.00" y2="363.30" stroke="#6e5a4c" stroke-width="1.2" />
<line x1="710.40" y1="350.50" x2="710.40" y2="361.40" stroke="#6e5a4c" stroke-width="1.2" />
<line x1="718.20" y1="350.50" x2="718.20" y2="357.40" stroke="#6e5a4c" stroke-width="1.2" />
<line x1="730.40" y1="350.50" x2="730.40" y2="370.10" stroke="#6e5a4c" stroke-width="1.2" />
<line x1="739.20" y1="350.50" x2="739.20" y2="367.40" stroke="#6e5a4c" stroke-width="1.2" />
<line x1="748.30" y1="350.50" x2="748.30" y2="371.40" stroke="#6e5a4c" stroke-width="1.2" />
<line x1="757.40" y1="350.50" x2="757.40" y2="357.40" stroke="#6e5a4c" stroke-width="1.2" />
<line x1="769.20" y1="350.50" x2="769.20" y2="362.80" stroke="#6e5a4c" stroke-width="1.2" />
<line x1="779.80" y1="350.50" x2="779.80" y2="331.30" stroke="#6e5a4c" stroke-width="1.2" />
<line x1="787.40" y1="350.50" x2="787.40" y2="362.10" stroke="#6e5a4c" stroke-width="1.2" />
<line x1="795.40" y1="350.50" x2="795.40" y2="338.30" stroke="#6e5a4c" stroke-width="1.2" />
<line x1="810.50" y1="350.50" x2="810.50" y2="355.00" stroke="#6e5a4c" stroke-width="1.2" />
<line x1="818.30" y1="350.50" x2="818.30" y2="342.30" stroke="#6e5a4c" stroke-width="1.2" />
<line x1="829.30" y1="350.50" x2="829.30" y2="365.00" stroke="#6e5a4c" stroke-width="1.2" />
<line x1="839.30" y1="350.50" x2="839.30" y2="353.20" stroke="#6e5a4c" stroke-width="1.2" />
<line x1="852.40" y1="350.50" x2="852.40" y2="315.50" stroke="#6e5a4c" stroke-width="1.2" />
<line x1="861.50" y1="350.50" x2="861.50" y2="313.30" stroke="#6e5a4c" stroke-width="1.2" />
<line x1="869.30" y1="350.50" x2="869.30" y2="307.30" stroke="#6e5a4c" stroke-width="1.2" />
<line x1="883.40" y1="350.50" x2="883.40" y2="335.50" stroke="#6e5a4c" stroke-width="1.2" />
<line x1="893.30" y1="350.50" x2="893.30" y2="323.10" stroke="#6e5a4c" stroke-width="1.2" />
<line x1="904.20" y1="350.50" x2="904.20" y2="322.40" stroke="#6e5a4c" stroke-width="1.2" />
<line x1="908.20" y1="350.50" x2="908.20" y2="319.10" stroke="#6e5a4c" stroke-width="1.2" />
<line x1="921.90" y1="350.50" x2="921.90" y2="347.70" stroke="#6e5a4c" stroke-width="1.2" />
<line x1="933.20" y1="350.50" x2="933.20" y2="360.10" stroke="#6e5a4c" stroke-width="1.2" />
<line x1="940.50" y1="350.50" x2="940.50" y2="365.00" stroke="#6e5a4c" stroke-width="1.2" />
<line x1="953.70" y1="350.50" x2="953.70" y2="356.30" stroke="#6e5a4c" stroke-width="1.2" />
<line x1="961.40" y1="350.50" x2="961.40" y2="352.40" stroke="#6e5a4c" stroke-width="1.2" />
<line x1="974.40" y1="350.50" x2="974.40" y2="388.30" stroke="#6e5a4c" stroke-width="1.2" />
<line x1="982.40" y1="350.50" x2="982.40" y2="387.10" stroke="#6e5a4c" stroke-width="1.2" />
<line x1="994.30" y1="350.50" x2="994.30" y2="373.30" stroke="#6e5a4c" stroke-width="1.2" />
<line x1="1002.50" y1="350.50" x2="1002.50" y2="371.50" stroke="#6e5a4c" stroke-width="1.2" />
<line x1="708.20" y1="350.50" x2="708.20" y2="345.20" stroke="#9a8c3a" stroke-width="1.2" />
<line x1="721.30" y1="350.50" x2="721.30" y2="313.30" stroke="#9a8c3a" stroke-width="1.2" />
<line x1="730.40" y1="350.50" x2="730.40" y2="347.70" stroke="#9a8c3a" stroke-width="1.2" />
<line x1="743.40" y1="350.50" x2="743.40" y2="357.40" stroke="#9a8c3a" stroke-width="1.2" />
<line x1="755.20" y1="350.50" x2="755.20" y2="340.40" stroke="#9a8c3a" stroke-width="1.2" />
<line x1="763.40" y1="350.50" x2="763.40" y2="343.40" stroke="#9a8c3a" stroke-width="1.2" />
<line x1="771.40" y1="350.50" x2="771.40" y2="330.40" stroke="#9a8c3a" stroke-width="1.2" />
<line x1="782.30" y1="350.50" x2="782.30" y2="325.50" stroke="#9a8c3a" stroke-width="1.2" />
<line x1="795.40" y1="350.50" x2="795.40" y2="331.30" stroke="#9a8c3a" stroke-width="1.2" />
<line x1="804.50" y1="350.50" x2="804.50" y2="320.40" stroke="#9a8c3a" stroke-width="1.2" />
<line x1="813.60" y1="350.50" x2="813.60" y2="324.20" stroke="#9a8c3a" stroke-width="1.2" />
<line x1="825.40" y1="350.50" x2="825.40" y2="350.50" stroke="#9a8c3a" stroke-width="1.2" />
<line x1="835.50" y1="350.50" x2="835.50" y2="328.20" stroke="#9a8c3a" stroke-width="1.2" />
<line x1="847.50" y1="350.50" x2="847.50" y2="335.50" stroke="#9a8c3a" stroke-width="1.2" />
<line x1="854.20" y1="350.50" x2="854.20" y2="328.20" stroke="#9a8c3a" stroke-width="1.2" />
<line x1="863.30" y1="350.50" x2="863.30" y2="328.20" stroke="#9a8c3a" stroke-width="1.2" />
<line x1="876.40" y1="350.50" x2="876.40" y2="334.20" stroke="#9a8c3a" stroke-width="1.2" />
<line x1="887.30" y1="350.50" x2="887.30" y2="354.10" stroke="#9a8c3a" stroke-width="1.2" />
<line x1="898.20" y1="350.50" x2="898.20" y2="348.30" stroke="#9a8c3a" stroke-width="1.2" />
<line x1="906.40" y1="350.50" x2="906.40" y2="341.30" stroke="#9a8c3a" stroke-width="1.2" />
<line x1="917.30" y1="350.50" x2="917.30" y2="352.30" stroke="#9a8c3a" stroke-width="1.2" />
<line x1="925.20" y1="350.50" x2="925.20" y2="359.20" stroke="#9a8c3a" stroke-width="1.2" />
<line x1="936.80" y1="350.50" x2="936.80" y2="347.70" stroke="#9a8c3a" stroke-width="1.2" />
<line x1="948.30" y1="350.50" x2="948.30" y2="366.10" stroke="#9a8c3a" stroke-width="1.2" />
<line x1="958.30" y1="350.50" x2="958.30" y2="357.20" stroke="#9a8c3a" stroke-width="1.2" />
<line x1="970.30" y1="350.50" x2="970.30" y2="354.20" stroke="#9a8c3a" stroke-width="1.2" />
<line x1="977.40" y1="350.50" x2="977.40" y2="359.20" stroke="#9a8c3a" stroke-width="1.2" />
<line x1="989.20" y1="350.50" x2="989.20" y2="377.10" stroke="#9a8c3a" stroke-width="1.2" />
<line x1="1000.10" y1="350.50" x2="1000.10" y2="360.20" stroke="#9a8c3a" stroke-width="1.2" />
<line x1="601.50" y1="350.50" x2="601.50" y2="328.30" stroke="#7c8a00" stroke-width="1.2" />
<line x1="610.50" y1="350.50" x2="610.50" y2="396.30" stroke="#7c8a00" stroke-width="1.2" />
<line x1="619.60" y1="350.50" x2="619.60" y2="321.30" stroke="#7c8a00" stroke-width="1.2" />
<line x1="629.20" y1="350.50" x2="629.20" y2="380.20" stroke="#7c8a00" stroke-width="1.2" />
<line x1="642.40" y1="350.50" x2="642.40" y2="351.40" stroke="#7c8a00" stroke-width="1.2" />
<line x1="655.30" y1="350.50" x2="655.30" y2="368.40" stroke="#7c8a00" stroke-width="1.2" />
<line x1="661.50" y1="350.50" x2="661.50" y2="373.30" stroke="#7c8a00" stroke-width="1.2" />
<line x1="671.60" y1="350.50" x2="671.60" y2="355.10" stroke="#7c8a00" stroke-width="1.2" />
<line x1="682.50" y1="350.50" x2="682.50" y2="364.40" stroke="#7c8a00" stroke-width="1.2" />
<line x1="695.40" y1="350.50" x2="695.40" y2="377.20" stroke="#7c8a00" stroke-width="1.2" />
<line x1="703.30" y1="350.50" x2="703.30" y2="341.30" stroke="#7c8a00" stroke-width="1.2" />
<line x1="712.40" y1="350.50" x2="712.40" y2="354.30" stroke="#7c8a00" stroke-width="1.2" />
<line x1="725.20" y1="350.50" x2="725.20" y2="365.20" stroke="#7c8a00" stroke-width="1.2" />
<line x1="735.20" y1="350.50" x2="735.20" y2="339.20" stroke="#7c8a00" stroke-width="1.2" />
<line x1="746.50" y1="350.50" x2="746.50" y2="334.20" stroke="#7c8a00" stroke-width="1.2" />
<line x1="755.20" y1="350.50" x2="755.20" y2="349.20" stroke="#7c8a00" stroke-width="1.2" />
<line x1="769.20" y1="350.50" x2="769.20" y2="367.40" stroke="#7c8a00" stroke-width="1.2" />
<line x1="776.50" y1="350.50" x2="776.50" y2="338.30" stroke="#7c8a00" stroke-width="1.2" />
<line x1="787.40" y1="350.50" x2="787.40" y2="368.30" stroke="#7c8a00" stroke-width="1.2" />
<line x1="799.60" y1="350.50" x2="799.60" y2="335.50" stroke="#7c8a00" stroke-width="1.2" />
<line x1="810.50" y1="350.50" x2="810.50" y2="331.30" stroke="#7c8a00" stroke-width="1.2" />
<line x1="816.30" y1="350.50" x2="816.30" y2="383.20" stroke="#7c8a00" stroke-width="1.2" />
<line x1="828.40" y1="350.50" x2="828.40" y2="349.20" stroke="#7c8a00" stroke-width="1.2" />
<line x1="842.40" y1="350.50" x2="842.40" y2="338.30" stroke="#7c8a00" stroke-width="1.2" />
<line x1="852.40" y1="350.50" x2="852.40" y2="333.30" stroke="#7c8a00" stroke-width="1.2" />
<line x1="862.40" y1="350.50" x2="862.40" y2="336.40" stroke="#7c8a00" stroke-width="1.2" />
<line x1="873.30" y1="350.50" x2="873.30" y2="328.20" stroke="#7c8a00" stroke-width="1.2" />
<line x1="883.40" y1="350.50" x2="883.40" y2="332.40" stroke="#7c8a00" stroke-width="1.2" />
<line x1="892.40" y1="350.50" x2="892.40" y2="335.50" stroke="#7c8a00" stroke-width="1.2" />
<line x1="902.40" y1="350.50" x2="902.40" y2="332.40" stroke="#7c8a00" stroke-width="1.2" />
<line x1="915.50" y1="350.50" x2="915.50" y2="351.40" stroke="#7c8a00" stroke-width="1.2" />
<line x1="920.60" y1="350.50" x2="920.60" y2="347.70" stroke="#7c8a00" stroke-width="1.2" />
<line x1="935.20" y1="350.50" x2="935.20" y2="343.20" stroke="#7c8a00" stroke-width="1.2" />
<line x1="944.30" y1="350.50" x2="944.30" y2="353.20" stroke="#7c8a00" stroke-width="1.2" />
<line x1="951.50" y1="350.50" x2="951.50" y2="364.10" stroke="#7c8a00" stroke-width="1.2" />
<line x1="964.30" y1="350.50" x2="964.30" y2="357.20" stroke="#7c8a00" stroke-width="1.2" />
<line x1="977.40" y1="350.50" x2="977.40" y2="389.30" stroke="#7c8a00" stroke-width="1.2" />
<line x1="984.30" y1="350.50" x2="984.30" y2="380.20" stroke="#7c8a00" stroke-width="1.2" />
<line x1="1004.30" y1="350.50" x2="1004.30" y2="361.40" stroke="#7c8a00" stroke-width="1.2" />
<line x1="586.50" y1="350.50" x2="1020.50" y2="350.50" stroke="#f0f0f0" stroke-width="1.1" />
<rect x="658.90" y="358.90" width="5.2" height="5.2" fill="#a8907e"/>
<rect x="669.00" y="397.70" width="5.2" height="5.2" fill="#a8907e"/>
<rect x="675.90" y="351.70" width="5.2" height="5.2" fill="#a8907e"/>
<rect x="685.00" y="355.80" width="5.2" height="5.2" fill="#a8907e"/>
<rect x="697.40" y="360.70" width="5.2" height="5.2" fill="#a8907e"/>
<rect x="707.80" y="358.80" width="5.2" height="5.2" fill="#a8907e"/>
<rect x="715.60" y="354.80" width="5.2" height="5.2" fill="#a8907e"/>
<rect x="727.80" y="367.50" width="5.2" height="5.2" fill="#a8907e"/>
<rect x="736.60" y="364.80" width="5.2" height="5.2" fill="#a8907e"/>
<rect x="745.70" y="368.80" width="5.2" height="5.2" fill="#a8907e"/>
<rect x="754.80" y="354.80" width="5.2" height="5.2" fill="#a8907e"/>
<rect x="766.60" y="360.20" width="5.2" height="5.2" fill="#a8907e"/>
<rect x="777.20" y="328.70" width="5.2" height="5.2" fill="#a8907e"/>
<rect x="784.80" y="359.50" width="5.2" height="5.2" fill="#a8907e"/>
<rect x="792.80" y="335.70" width="5.2" height="5.2" fill="#a8907e"/>
<rect x="807.90" y="352.40" width="5.2" height="5.2" fill="#a8907e"/>
<rect x="815.70" y="339.70" width="5.2" height="5.2" fill="#a8907e"/>
<rect x="826.70" y="362.40" width="5.2" height="5.2" fill="#a8907e"/>
<rect x="836.70" y="350.60" width="5.2" height="5.2" fill="#a8907e"/>
<rect x="849.80" y="312.90" width="5.2" height="5.2" fill="#a8907e"/>
<rect x="858.90" y="310.70" width="5.2" height="5.2" fill="#a8907e"/>
<rect x="866.70" y="304.70" width="5.2" height="5.2" fill="#a8907e"/>
<rect x="880.80" y="332.90" width="5.2" height="5.2" fill="#a8907e"/>
<rect x="890.70" y="320.50" width="5.2" height="5.2" fill="#a8907e"/>
<rect x="901.60" y="319.80" width="5.2" height="5.2" fill="#a8907e"/>
<rect x="905.60" y="316.50" width="5.2" height="5.2" fill="#a8907e"/>
<rect x="919.30" y="345.10" width="5.2" height="5.2" fill="#a8907e"/>
<rect x="930.60" y="357.50" width="5.2" height="5.2" fill="#a8907e"/>
<rect x="937.90" y="362.40" width="5.2" height="5.2" fill="#a8907e"/>
<rect x="951.10" y="353.70" width="5.2" height="5.2" fill="#a8907e"/>
<rect x="958.80" y="349.80" width="5.2" height="5.2" fill="#a8907e"/>
<rect x="971.80" y="385.70" width="5.2" height="5.2" fill="#a8907e"/>
<rect x="979.80" y="384.50" width="5.2" height="5.2" fill="#a8907e"/>
<rect x="991.70" y="370.70" width="5.2" height="5.2" fill="#a8907e"/>
<rect x="999.90" y="368.90" width="5.2" height="5.2" fill="#a8907e"/>
<rect x="705.60" y="342.60" width="5.2" height="5.2" fill="#ffe866"/>
<rect x="718.70" y="310.70" width="5.2" height="5.2" fill="#ffe866"/>
<rect x="727.80" y="345.10" width="5.2" height="5.2" fill="#ffe866"/>
<rect x="740.80" y="354.80" width="5.2" height="5.2" fill="#ffe866"/>
<rect x="752.60" y="337.80" width="5.2" height="5.2" fill="#ffe866"/>
<rect x="760.80" y="340.80" width="5.2" height="5.2" fill="#ffe866"/>
<rect x="768.80" y="327.80" width="5.2" height="5.2" fill="#ffe866"/>
<rect x="779.70" y="322.90" width="5.2" height="5.2" fill="#ffe866"/>
<rect x="792.80" y="328.70" width="5.2" height="5.2" fill="#ffe866"/>
<rect x="801.90" y="317.80" width="5.2" height="5.2" fill="#ffe866"/>
<rect x="811.00" y="321.60" width="5.2" height="5.2" fill="#ffe866"/>
<rect x="822.80" y="347.90" width="5.2" height="5.2" fill="#ffe866"/>
<rect x="832.90" y="325.60" width="5.2" height="5.2" fill="#ffe866"/>
<rect x="844.90" y="332.90" width="5.2" height="5.2" fill="#ffe866"/>
<rect x="851.60" y="325.60" width="5.2" height="5.2" fill="#ffe866"/>
<rect x="860.70" y="325.60" width="5.2" height="5.2" fill="#ffe866"/>
<rect x="873.80" y="331.60" width="5.2" height="5.2" fill="#ffe866"/>
<rect x="884.70" y="351.50" width="5.2" height="5.2" fill="#ffe866"/>
<rect x="895.60" y="345.70" width="5.2" height="5.2" fill="#ffe866"/>
<rect x="903.80" y="338.70" width="5.2" height="5.2" fill="#ffe866"/>
<rect x="914.70" y="349.70" width="5.2" height="5.2" fill="#ffe866"/>
<rect x="922.60" y="356.60" width="5.2" height="5.2" fill="#ffe866"/>
<rect x="934.20" y="345.10" width="5.2" height="5.2" fill="#ffe866"/>
<rect x="945.70" y="363.50" width="5.2" height="5.2" fill="#ffe866"/>
<rect x="955.70" y="354.60" width="5.2" height="5.2" fill="#ffe866"/>
<rect x="967.70" y="351.60" width="5.2" height="5.2" fill="#ffe866"/>
<rect x="974.80" y="356.60" width="5.2" height="5.2" fill="#ffe866"/>
<rect x="986.60" y="374.50" width="5.2" height="5.2" fill="#ffe866"/>
<rect x="997.50" y="357.60" width="5.2" height="5.2" fill="#ffe866"/>
<rect x="598.90" y="325.70" width="5.2" height="5.2" fill="#ccff00"/>
<rect x="607.90" y="393.70" width="5.2" height="5.2" fill="#ccff00"/>
<rect x="617.00" y="318.70" width="5.2" height="5.2" fill="#ccff00"/>
<rect x="626.60" y="377.60" width="5.2" height="5.2" fill="#ccff00"/>
<rect x="639.80" y="348.80" width="5.2" height="5.2" fill="#ccff00"/>
<rect x="652.70" y="365.80" width="5.2" height="5.2" fill="#ccff00"/>
<rect x="658.90" y="370.70" width="5.2" height="5.2" fill="#ccff00"/>
<rect x="669.00" y="352.50" width="5.2" height="5.2" fill="#ccff00"/>
<rect x="679.90" y="361.80" width="5.2" height="5.2" fill="#ccff00"/>
<rect x="692.80" y="374.60" width="5.2" height="5.2" fill="#ccff00"/>
<rect x="700.70" y="338.70" width="5.2" height="5.2" fill="#ccff00"/>
<rect x="709.80" y="351.70" width="5.2" height="5.2" fill="#ccff00"/>
<rect x="722.60" y="362.60" width="5.2" height="5.2" fill="#ccff00"/>
<rect x="732.60" y="336.60" width="5.2" height="5.2" fill="#ccff00"/>
<rect x="743.90" y="331.60" width="5.2" height="5.2" fill="#ccff00"/>
<rect x="752.60" y="346.60" width="5.2" height="5.2" fill="#ccff00"/>
<rect x="766.60" y="364.80" width="5.2" height="5.2" fill="#ccff00"/>
<rect x="773.90" y="335.70" width="5.2" height="5.2" fill="#ccff00"/>
<rect x="784.80" y="365.70" width="5.2" height="5.2" fill="#ccff00"/>
<rect x="797.00" y="332.90" width="5.2" height="5.2" fill="#ccff00"/>
<rect x="807.90" y="328.70" width="5.2" height="5.2" fill="#ccff00"/>
<rect x="813.70" y="380.60" width="5.2" height="5.2" fill="#ccff00"/>
<rect x="825.80" y="346.60" width="5.2" height="5.2" fill="#ccff00"/>
<rect x="839.80" y="335.70" width="5.2" height="5.2" fill="#ccff00"/>
<rect x="849.80" y="330.70" width="5.2" height="5.2" fill="#ccff00"/>
<rect x="859.80" y="333.80" width="5.2" height="5.2" fill="#ccff00"/>
<rect x="870.70" y="325.60" width="5.2" height="5.2" fill="#ccff00"/>
<rect x="880.80" y="329.80" width="5.2" height="5.2" fill="#ccff00"/>
<rect x="889.80" y="332.90" width="5.2" height="5.2" fill="#ccff00"/>
<rect x="899.80" y="329.80" width="5.2" height="5.2" fill="#ccff00"/>
<rect x="912.90" y="348.80" width="5.2" height="5.2" fill="#ccff00"/>
<rect x="918.00" y="345.10" width="5.2" height="5.2" fill="#ccff00"/>
<rect x="932.60" y="340.60" width="5.2" height="5.2" fill="#ccff00"/>
<rect x="941.70" y="350.60" width="5.2" height="5.2" fill="#ccff00"/>
<rect x="948.90" y="361.50" width="5.2" height="5.2" fill="#ccff00"/>
<rect x="961.70" y="354.60" width="5.2" height="5.2" fill="#ccff00"/>
<rect x="974.80" y="386.70" width="5.2" height="5.2" fill="#ccff00"/>
<rect x="981.70" y="377.60" width="5.2" height="5.2" fill="#ccff00"/>
<rect x="1001.70" y="358.80" width="5.2" height="5.2" fill="#ccff00"/>
<line x1="601.50" y1="441.50" x2="601.50" y2="546.00" stroke="#242424" stroke-width="1" />
<line x1="642.50" y1="441.50" x2="642.50" y2="546.00" stroke="#242424" stroke-width="1" />
<line x1="682.50" y1="441.50" x2="682.50" y2="546.00" stroke="#242424" stroke-width="1" />
<line x1="722.50" y1="441.50" x2="722.50" y2="546.00" stroke="#242424" stroke-width="1" />
<line x1="762.50" y1="441.50" x2="762.50" y2="546.00" stroke="#242424" stroke-width="1" />
<line x1="803.50" y1="441.50" x2="803.50" y2="546.00" stroke="#242424" stroke-width="1" />
<line x1="843.50" y1="441.50" x2="843.50" y2="546.00" stroke="#242424" stroke-width="1" />
<line x1="883.50" y1="441.50" x2="883.50" y2="546.00" stroke="#242424" stroke-width="1" />
<line x1="923.50" y1="441.50" x2="923.50" y2="546.00" stroke="#242424" stroke-width="1" />
<line x1="963.50" y1="441.50" x2="963.50" y2="546.00" stroke="#242424" stroke-width="1" />
<line x1="1004.50" y1="441.50" x2="1004.50" y2="546.00" stroke="#242424" stroke-width="1" />
<line x1="586.50" y1="448.50" x2="1020.50" y2="448.50" stroke="#242424" stroke-width="1" />
<line x1="586.50" y1="457.50" x2="1020.50" y2="457.50" stroke="#242424" stroke-width="1" />
<line x1="586.50" y1="467.50" x2="1020.50" y2="467.50" stroke="#242424" stroke-width="1" />
<line x1="586.50" y1="476.50" x2="1020.50" y2="476.50" stroke="#242424" stroke-width="1" />
<line x1="586.50" y1="485.50" x2="1020.50" y2="485.50" stroke="#242424" stroke-width="1" />
<line x1="586.50" y1="494.50" x2="1020.50" y2="494.50" stroke="#242424" stroke-width="1" />
<line x1="586.50" y1="504.50" x2="1020.50" y2="504.50" stroke="#242424" stroke-width="1" />
<line x1="586.50" y1="513.50" x2="1020.50" y2="513.50" stroke="#242424" stroke-width="1" />
<line x1="586.50" y1="522.50" x2="1020.50" y2="522.50" stroke="#242424" stroke-width="1" />
<line x1="586.50" y1="531.50" x2="1020.50" y2="531.50" stroke="#242424" stroke-width="1" />
<rect x="586.5" y="441.5" width="434.0" height="100.0" fill="none" stroke="#242424" stroke-width="1"/>
<line x1="582.50" y1="457.50" x2="586.50" y2="457.50" stroke="#242424" stroke-width="1" />
<text transform="translate(580.30,457.50) rotate(-90) scale(1,1.14)" font-family="Liberation Mono" font-size="8.8" fill="#bdbdbd" text-anchor="middle" font-weight="normal" >0.43</text>
<line x1="582.50" y1="494.50" x2="586.50" y2="494.50" stroke="#242424" stroke-width="1" />
<text transform="translate(580.30,494.50) rotate(-90) scale(1,1.14)" font-family="Liberation Mono" font-size="8.8" fill="#bdbdbd" text-anchor="middle" font-weight="normal" >0.00</text>
<line x1="582.50" y1="531.50" x2="586.50" y2="531.50" stroke="#242424" stroke-width="1" />
<text transform="translate(580.30,531.50) rotate(-90) scale(1,1.14)" font-family="Liberation Mono" font-size="8.8" fill="#bdbdbd" text-anchor="middle" font-weight="normal" >-0.43</text>
<text transform="translate(568.30,491.20) rotate(-90) scale(1,1.1)" font-family="Liberation Mono" font-size="11.8" fill="#e0e0e0" text-anchor="middle" font-weight="normal" >Vert Res [km]</text>
<text transform="translate(601.50,556.10) scale(1,1.14)" font-family="Liberation Mono" font-size="8.8" fill="#bdbdbd" text-anchor="middle" font-weight="normal" >-0</text>
<text transform="translate(642.50,556.10) scale(1,1.14)" font-family="Liberation Mono" font-size="8.8" fill="#bdbdbd" text-anchor="middle" font-weight="normal" >8</text>
<text transform="translate(682.50,556.10) scale(1,1.14)" font-family="Liberation Mono" font-size="8.8" fill="#bdbdbd" text-anchor="middle" font-weight="normal" >17</text>
<text transform="translate(722.50,556.10) scale(1,1.14)" font-family="Liberation Mono" font-size="8.8" fill="#bdbdbd" text-anchor="middle" font-weight="normal" >25</text>
<text transform="translate(762.50,556.10) scale(1,1.14)" font-family="Liberation Mono" font-size="8.8" fill="#bdbdbd" text-anchor="middle" font-weight="normal" >34</text>
<text transform="translate(803.50,556.10) scale(1,1.14)" font-family="Liberation Mono" font-size="8.8" fill="#bdbdbd" text-anchor="middle" font-weight="normal" >42</text>
<text transform="translate(843.50,556.10) scale(1,1.14)" font-family="Liberation Mono" font-size="8.8" fill="#bdbdbd" text-anchor="middle" font-weight="normal" >50</text>
<text transform="translate(883.50,556.10) scale(1,1.14)" font-family="Liberation Mono" font-size="8.8" fill="#bdbdbd" text-anchor="middle" font-weight="normal" >59</text>
<text transform="translate(923.50,556.10) scale(1,1.14)" font-family="Liberation Mono" font-size="8.8" fill="#bdbdbd" text-anchor="middle" font-weight="normal" >67</text>
<text transform="translate(963.50,556.10) scale(1,1.14)" font-family="Liberation Mono" font-size="8.8" fill="#bdbdbd" text-anchor="middle" font-weight="normal" >76</text>
<text transform="translate(1004.50,556.10) scale(1,1.14)" font-family="Liberation Mono" font-size="8.8" fill="#bdbdbd" text-anchor="middle" font-weight="normal" >84</text>
<text transform="translate(803.00,569.00) scale(1,1.1)" font-family="Liberation Mono" font-size="11.7" fill="#e0e0e0" text-anchor="middle" font-weight="normal" >Length Along Trail [km]</text>
<line x1="661.60" y1="494.50" x2="661.60" y2="483.30" stroke="#6e5a4c" stroke-width="1.2" />
<line x1="671.30" y1="494.50" x2="671.30" y2="445.50" stroke="#6e5a4c" stroke-width="1.2" />
<line x1="678.40" y1="494.50" x2="678.40" y2="491.40" stroke="#6e5a4c" stroke-width="1.2" />
<line x1="687.40" y1="494.50" x2="687.40" y2="486.20" stroke="#6e5a4c" stroke-width="1.2" />
<line x1="700.00" y1="494.50" x2="700.00" y2="481.30" stroke="#6e5a4c" stroke-width="1.2" />
<line x1="710.40" y1="494.50" x2="710.40" y2="484.20" stroke="#6e5a4c" stroke-width="1.2" />
<line x1="718.20" y1="494.50" x2="718.20" y2="487.50" stroke="#6e5a4c" stroke-width="1.2" />
<line x1="730.50" y1="494.50" x2="730.50" y2="474.50" stroke="#6e5a4c" stroke-width="1.2" />
<line x1="739.20" y1="494.50" x2="739.20" y2="478.50" stroke="#6e5a4c" stroke-width="1.2" />
<line x1="748.60" y1="494.50" x2="748.60" y2="473.20" stroke="#6e5a4c" stroke-width="1.2" />
<line x1="757.20" y1="494.50" x2="757.20" y2="488.40" stroke="#6e5a4c" stroke-width="1.2" />
<line x1="769.60" y1="494.50" x2="769.60" y2="481.20" stroke="#6e5a4c" stroke-width="1.2" />
<line x1="780.60" y1="494.50" x2="780.60" y2="514.20" stroke="#6e5a4c" stroke-width="1.2" />
<line x1="787.30" y1="494.50" x2="787.30" y2="482.30" stroke="#6e5a4c" stroke-width="1.2" />
<line x1="795.50" y1="494.50" x2="795.50" y2="504.70" stroke="#6e5a4c" stroke-width="1.2" />
<line x1="810.40" y1="494.50" x2="810.40" y2="490.30" stroke="#6e5a4c" stroke-width="1.2" />
<line x1="818.40" y1="494.50" x2="818.40" y2="502.20" stroke="#6e5a4c" stroke-width="1.2" />
<line x1="829.50" y1="494.50" x2="829.50" y2="479.30" stroke="#6e5a4c" stroke-width="1.2" />
<line x1="839.40" y1="494.50" x2="839.40" y2="491.30" stroke="#6e5a4c" stroke-width="1.2" />
<line x1="852.20" y1="494.50" x2="852.20" y2="530.00" stroke="#6e5a4c" stroke-width="1.2" />
<line x1="861.30" y1="494.50" x2="861.30" y2="532.30" stroke="#6e5a4c" stroke-width="1.2" />
<line x1="869.40" y1="494.50" x2="869.40" y2="538.10" stroke="#6e5a4c" stroke-width="1.2" />
<line x1="882.70" y1="494.50" x2="882.70" y2="510.40" stroke="#6e5a4c" stroke-width="1.2" />
<line x1="893.40" y1="494.50" x2="893.40" y2="522.40" stroke="#6e5a4c" stroke-width="1.2" />
<line x1="904.20" y1="494.50" x2="904.20" y2="522.40" stroke="#6e5a4c" stroke-width="1.2" />
<line x1="908.60" y1="494.50" x2="908.60" y2="525.30" stroke="#6e5a4c" stroke-width="1.2" />
<line x1="921.00" y1="494.50" x2="921.00" y2="496.50" stroke="#6e5a4c" stroke-width="1.2" />
<line x1="933.40" y1="494.50" x2="933.40" y2="484.20" stroke="#6e5a4c" stroke-width="1.2" />
<line x1="940.50" y1="494.50" x2="940.50" y2="479.30" stroke="#6e5a4c" stroke-width="1.2" />
<line x1="953.50" y1="494.50" x2="953.50" y2="488.10" stroke="#6e5a4c" stroke-width="1.2" />
<line x1="962.10" y1="494.50" x2="962.10" y2="491.90" stroke="#6e5a4c" stroke-width="1.2" />
<line x1="974.50" y1="494.50" x2="974.50" y2="457.30" stroke="#6e5a4c" stroke-width="1.2" />
<line x1="982.50" y1="494.50" x2="982.50" y2="457.40" stroke="#6e5a4c" stroke-width="1.2" />
<line x1="994.40" y1="494.50" x2="994.40" y2="472.70" stroke="#6e5a4c" stroke-width="1.2" />
<line x1="1002.20" y1="494.50" x2="1002.20" y2="473.60" stroke="#6e5a4c" stroke-width="1.2" />
<line x1="708.10" y1="494.50" x2="708.10" y2="497.40" stroke="#9a8c3a" stroke-width="1.2" />
<line x1="721.50" y1="494.50" x2="721.50" y2="515.20" stroke="#9a8c3a" stroke-width="1.2" />
<line x1="730.50" y1="494.50" x2="730.50" y2="496.50" stroke="#9a8c3a" stroke-width="1.2" />
<line x1="743.40" y1="494.50" x2="743.40" y2="491.30" stroke="#9a8c3a" stroke-width="1.2" />
<line x1="755.50" y1="494.50" x2="755.50" y2="500.30" stroke="#9a8c3a" stroke-width="1.2" />
<line x1="763.50" y1="494.50" x2="763.50" y2="498.40" stroke="#9a8c3a" stroke-width="1.2" />
<line x1="771.50" y1="494.50" x2="771.50" y2="505.20" stroke="#9a8c3a" stroke-width="1.2" />
<line x1="782.60" y1="494.50" x2="782.60" y2="508.10" stroke="#9a8c3a" stroke-width="1.2" />
<line x1="795.50" y1="494.50" x2="795.50" y2="505.60" stroke="#9a8c3a" stroke-width="1.2" />
<line x1="804.50" y1="494.50" x2="804.50" y2="511.30" stroke="#9a8c3a" stroke-width="1.2" />
<line x1="813.20" y1="494.50" x2="813.20" y2="508.10" stroke="#9a8c3a" stroke-width="1.2" />
<line x1="825.50" y1="494.50" x2="825.50" y2="495.50" stroke="#9a8c3a" stroke-width="1.2" />
<line x1="835.60" y1="494.50" x2="835.60" y2="506.20" stroke="#9a8c3a" stroke-width="1.2" />
<line x1="847.40" y1="494.50" x2="847.40" y2="502.20" stroke="#9a8c3a" stroke-width="1.2" />
<line x1="854.70" y1="494.50" x2="854.70" y2="507.10" stroke="#9a8c3a" stroke-width="1.2" />
<line x1="863.20" y1="494.50" x2="863.20" y2="506.20" stroke="#9a8c3a" stroke-width="1.2" />
<line x1="876.20" y1="494.50" x2="876.20" y2="503.10" stroke="#9a8c3a" stroke-width="1.2" />
<line x1="887.60" y1="494.50" x2="887.60" y2="491.90" stroke="#9a8c3a" stroke-width="1.2" />
<line x1="898.10" y1="494.50" x2="898.10" y2="496.50" stroke="#9a8c3a" stroke-width="1.2" />
<line x1="906.70" y1="494.50" x2="906.70" y2="499.50" stroke="#9a8c3a" stroke-width="1.2" />
<line x1="917.30" y1="494.50" x2="917.30" y2="494.50" stroke="#9a8c3a" stroke-width="1.2" />
<line x1="925.40" y1="494.50" x2="925.40" y2="489.00" stroke="#9a8c3a" stroke-width="1.2" />
<line x1="936.30" y1="494.50" x2="936.30" y2="496.50" stroke="#9a8c3a" stroke-width="1.2" />
<line x1="948.30" y1="494.50" x2="948.30" y2="486.50" stroke="#9a8c3a" stroke-width="1.2" />
<line x1="958.20" y1="494.50" x2="958.20" y2="491.30" stroke="#9a8c3a" stroke-width="1.2" />
<line x1="970.30" y1="494.50" x2="970.30" y2="491.90" stroke="#9a8c3a" stroke-width="1.2" />
<line x1="977.70" y1="494.50" x2="977.70" y2="490.30" stroke="#9a8c3a" stroke-width="1.2" />
<line x1="989.20" y1="494.50" x2="989.20" y2="480.30" stroke="#9a8c3a" stroke-width="1.2" />
<line x1="1000.30" y1="494.50" x2="1000.30" y2="489.10" stroke="#9a8c3a" stroke-width="1.2" />
<line x1="601.40" y1="494.50" x2="601.40" y2="495.60" stroke="#7c8a00" stroke-width="1.2" />
<line x1="610.20" y1="494.50" x2="610.20" y2="492.30" stroke="#7c8a00" stroke-width="1.2" />
<line x1="619.60" y1="494.50" x2="619.60" y2="496.50" stroke="#7c8a00" stroke-width="1.2" />
<line x1="629.30" y1="494.50" x2="629.30" y2="493.70" stroke="#7c8a00" stroke-width="1.2" />
<line x1="642.50" y1="494.50" x2="642.50" y2="494.60" stroke="#7c8a00" stroke-width="1.2" />
<line x1="655.50" y1="494.50" x2="655.50" y2="494.60" stroke="#7c8a00" stroke-width="1.2" />
<line x1="661.60" y1="494.50" x2="661.60" y2="493.70" stroke="#7c8a00" stroke-width="1.2" />
<line x1="671.30" y1="494.50" x2="671.30" y2="494.60" stroke="#7c8a00" stroke-width="1.2" />
<line x1="682.20" y1="494.50" x2="682.20" y2="494.60" stroke="#7c8a00" stroke-width="1.2" />
<line x1="695.20" y1="494.50" x2="695.20" y2="493.40" stroke="#7c8a00" stroke-width="1.2" />
<line x1="703.40" y1="494.50" x2="703.40" y2="495.50" stroke="#7c8a00" stroke-width="1.2" />
<line x1="712.30" y1="494.50" x2="712.30" y2="494.20" stroke="#7c8a00" stroke-width="1.2" />
<line x1="725.30" y1="494.50" x2="725.30" y2="494.20" stroke="#7c8a00" stroke-width="1.2" />
<line x1="735.40" y1="494.50" x2="735.40" y2="495.50" stroke="#7c8a00" stroke-width="1.2" />
<line x1="746.30" y1="494.50" x2="746.30" y2="495.50" stroke="#7c8a00" stroke-width="1.2" />
<line x1="755.50" y1="494.50" x2="755.50" y2="494.20" stroke="#7c8a00" stroke-width="1.2" />
<line x1="769.60" y1="494.50" x2="769.60" y2="494.20" stroke="#7c8a00" stroke-width="1.2" />
<line x1="776.50" y1="494.50" x2="776.50" y2="495.50" stroke="#7c8a00" stroke-width="1.2" />
<line x1="787.30" y1="494.50" x2="787.30" y2="493.20" stroke="#7c8a00" stroke-width="1.2" />
<line x1="799.30" y1="494.50" x2="799.30" y2="495.50" stroke="#7c8a00" stroke-width="1.2" />
<line x1="810.40" y1="494.50" x2="810.40" y2="495.50" stroke="#7c8a00" stroke-width="1.2" />
<line x1="816.50" y1="494.50" x2="816.50" y2="493.20" stroke="#7c8a00" stroke-width="1.2" />
<line x1="828.50" y1="494.50" x2="828.50" y2="494.20" stroke="#7c8a00" stroke-width="1.2" />
<line x1="842.30" y1="494.50" x2="842.30" y2="495.50" stroke="#7c8a00" stroke-width="1.2" />
<line x1="852.20" y1="494.50" x2="852.20" y2="495.50" stroke="#7c8a00" stroke-width="1.2" />
<line x1="862.30" y1="494.50" x2="862.30" y2="495.50" stroke="#7c8a00" stroke-width="1.2" />
<line x1="873.40" y1="494.50" x2="873.40" y2="495.50" stroke="#7c8a00" stroke-width="1.2" />
<line x1="882.70" y1="494.50" x2="882.70" y2="495.50" stroke="#7c8a00" stroke-width="1.2" />
<line x1="892.40" y1="494.50" x2="892.40" y2="495.50" stroke="#7c8a00" stroke-width="1.2" />
<line x1="902.50" y1="494.50" x2="902.50" y2="495.50" stroke="#7c8a00" stroke-width="1.2" />
<line x1="915.30" y1="494.50" x2="915.30" y2="494.20" stroke="#7c8a00" stroke-width="1.2" />
<line x1="920.50" y1="494.50" x2="920.50" y2="494.20" stroke="#7c8a00" stroke-width="1.2" />
<line x1="935.30" y1="494.50" x2="935.30" y2="495.50" stroke="#7c8a00" stroke-width="1.2" />
<line x1="944.50" y1="494.50" x2="944.50" y2="494.20" stroke="#7c8a00" stroke-width="1.2" />
<line x1="951.20" y1="494.50" x2="951.20" y2="494.20" stroke="#7c8a00" stroke-width="1.2" />
<line x1="964.40" y1="494.50" x2="964.40" y2="494.20" stroke="#7c8a00" stroke-width="1.2" />
<line x1="977.70" y1="494.50" x2="977.70" y2="491.90" stroke="#7c8a00" stroke-width="1.2" />
<line x1="984.40" y1="494.50" x2="984.40" y2="493.30" stroke="#7c8a00" stroke-width="1.2" />
<line x1="1004.50" y1="494.50" x2="1004.50" y2="494.30" stroke="#7c8a00" stroke-width="1.2" />
<line x1="586.50" y1="494.50" x2="1020.50" y2="494.50" stroke="#f0f0f0" stroke-width="1.1" />
<rect x="659.00" y="480.70" width="5.2" height="5.2" fill="#a8907e"/>
<rect x="668.70" y="442.90" width="5.2" height="5.2" fill="#a8907e"/>
<rect x="675.80" y="488.80" width="5.2" height="5.2" fill="#a8907e"/>
<rect x="684.80" y="483.60" width="5.2" height="5.2" fill="#a8907e"/>
<rect x="697.40" y="478.70" width="5.2" height="5.2" fill="#a8907e"/>
<rect x="707.80" y="481.60" width="5.2" height="5.2" fill="#a8907e"/>
<rect x="715.60" y="484.90" width="5.2" height="5.2" fill="#a8907e"/>
<rect x="727.90" y="471.90" width="5.2" height="5.2" fill="#a8907e"/>
<rect x="736.60" y="475.90" width="5.2" height="5.2" fill="#a8907e"/>
<rect x="746.00" y="470.60" width="5.2" height="5.2" fill="#a8907e"/>
<rect x="754.60" y="485.80" width="5.2" height="5.2" fill="#a8907e"/>
<rect x="767.00" y="478.60" width="5.2" height="5.2" fill="#a8907e"/>
<rect x="778.00" y="511.60" width="5.2" height="5.2" fill="#a8907e"/>
<rect x="784.70" y="479.70" width="5.2" height="5.2" fill="#a8907e"/>
<rect x="792.90" y="502.10" width="5.2" height="5.2" fill="#a8907e"/>
<rect x="807.80" y="487.70" width="5.2" height="5.2" fill="#a8907e"/>
<rect x="815.80" y="499.60" width="5.2" height="5.2" fill="#a8907e"/>
<rect x="826.90" y="476.70" width="5.2" height="5.2" fill="#a8907e"/>
<rect x="836.80" y="488.70" width="5.2" height="5.2" fill="#a8907e"/>
<rect x="849.60" y="527.40" width="5.2" height="5.2" fill="#a8907e"/>
<rect x="858.70" y="529.70" width="5.2" height="5.2" fill="#a8907e"/>
<rect x="866.80" y="535.50" width="5.2" height="5.2" fill="#a8907e"/>
<rect x="880.10" y="507.80" width="5.2" height="5.2" fill="#a8907e"/>
<rect x="890.80" y="519.80" width="5.2" height="5.2" fill="#a8907e"/>
<rect x="901.60" y="519.80" width="5.2" height="5.2" fill="#a8907e"/>
<rect x="906.00" y="522.70" width="5.2" height="5.2" fill="#a8907e"/>
<rect x="918.40" y="493.90" width="5.2" height="5.2" fill="#a8907e"/>
<rect x="930.80" y="481.60" width="5.2" height="5.2" fill="#a8907e"/>
<rect x="937.90" y="476.70" width="5.2" height="5.2" fill="#a8907e"/>
<rect x="950.90" y="485.50" width="5.2" height="5.2" fill="#a8907e"/>
<rect x="959.50" y="489.30" width="5.2" height="5.2" fill="#a8907e"/>
<rect x="971.90" y="454.70" width="5.2" height="5.2" fill="#a8907e"/>
<rect x="979.90" y="454.80" width="5.2" height="5.2" fill="#a8907e"/>
<rect x="991.80" y="470.10" width="5.2" height="5.2" fill="#a8907e"/>
<rect x="999.60" y="471.00" width="5.2" height="5.2" fill="#a8907e"/>
<rect x="705.50" y="494.80" width="5.2" height="5.2" fill="#ffe866"/>
<rect x="718.90" y="512.60" width="5.2" height="5.2" fill="#ffe866"/>
<rect x="727.90" y="493.90" width="5.2" height="5.2" fill="#ffe866"/>
<rect x="740.80" y="488.70" width="5.2" height="5.2" fill="#ffe866"/>
<rect x="752.90" y="497.70" width="5.2" height="5.2" fill="#ffe866"/>
<rect x="760.90" y="495.80" width="5.2" height="5.2" fill="#ffe866"/>
<rect x="768.90" y="502.60" width="5.2" height="5.2" fill="#ffe866"/>
<rect x="780.00" y="505.50" width="5.2" height="5.2" fill="#ffe866"/>
<rect x="792.90" y="503.00" width="5.2" height="5.2" fill="#ffe866"/>
<rect x="801.90" y="508.70" width="5.2" height="5.2" fill="#ffe866"/>
<rect x="810.60" y="505.50" width="5.2" height="5.2" fill="#ffe866"/>
<rect x="822.90" y="492.90" width="5.2" height="5.2" fill="#ffe866"/>
<rect x="833.00" y="503.60" width="5.2" height="5.2" fill="#ffe866"/>
<rect x="844.80" y="499.60" width="5.2" height="5.2" fill="#ffe866"/>
<rect x="852.10" y="504.50" width="5.2" height="5.2" fill="#ffe866"/>
<rect x="860.60" y="503.60" width="5.2" height="5.2" fill="#ffe866"/>
<rect x="873.60" y="500.50" width="5.2" height="5.2" fill="#ffe866"/>
<rect x="885.00" y="489.30" width="5.2" height="5.2" fill="#ffe866"/>
<rect x="895.50" y="493.90" width="5.2" height="5.2" fill="#ffe866"/>
<rect x="904.10" y="496.90" width="5.2" height="5.2" fill="#ffe866"/>
<rect x="914.70" y="491.90" width="5.2" height="5.2" fill="#ffe866"/>
<rect x="922.80" y="486.40" width="5.2" height="5.2" fill="#ffe866"/>
<rect x="933.70" y="493.90" width="5.2" height="5.2" fill="#ffe866"/>
<rect x="945.70" y="483.90" width="5.2" height="5.2" fill="#ffe866"/>
<rect x="955.60" y="488.70" width="5.2" height="5.2" fill="#ffe866"/>
<rect x="967.70" y="489.30" width="5.2" height="5.2" fill="#ffe866"/>
<rect x="975.10" y="487.70" width="5.2" height="5.2" fill="#ffe866"/>
<rect x="986.60" y="477.70" width="5.2" height="5.2" fill="#ffe866"/>
<rect x="997.70" y="486.50" width="5.2" height="5.2" fill="#ffe866"/>
<rect x="598.80" y="493.00" width="5.2" height="5.2" fill="#ccff00"/>
<rect x="607.60" y="489.70" width="5.2" height="5.2" fill="#ccff00"/>
<rect x="617.00" y="493.90" width="5.2" height="5.2" fill="#ccff00"/>
<rect x="626.70" y="491.10" width="5.2" height="5.2" fill="#ccff00"/>
<rect x="639.90" y="492.00" width="5.2" height="5.2" fill="#ccff00"/>
<rect x="652.90" y="492.00" width="5.2" height="5.2" fill="#ccff00"/>
<rect x="659.00" y="491.10" width="5.2" height="5.2" fill="#ccff00"/>
<rect x="668.70" y="492.00" width="5.2" height="5.2" fill="#ccff00"/>
<rect x="679.60" y="492.00" width="5.2" height="5.2" fill="#ccff00"/>
<rect x="692.60" y="490.80" width="5.2" height="5.2" fill="#ccff00"/>
<rect x="700.80" y="492.90" width="5.2" height="5.2" fill="#ccff00"/>
<rect x="709.70" y="491.60" width="5.2" height="5.2" fill="#ccff00"/>
<rect x="722.70" y="491.60" width="5.2" height="5.2" fill="#ccff00"/>
<rect x="732.80" y="492.90" width="5.2" height="5.2" fill="#ccff00"/>
<rect x="743.70" y="492.90" width="5.2" height="5.2" fill="#ccff00"/>
<rect x="752.90" y="491.60" width="5.2" height="5.2" fill="#ccff00"/>
<rect x="767.00" y="491.60" width="5.2" height="5.2" fill="#ccff00"/>
<rect x="773.90" y="492.90" width="5.2" height="5.2" fill="#ccff00"/>
<rect x="784.70" y="490.60" width="5.2" height="5.2" fill="#ccff00"/>
<rect x="796.70" y="492.90" width="5.2" height="5.2" fill="#ccff00"/>
<rect x="807.80" y="492.90" width="5.2" height="5.2" fill="#ccff00"/>
<rect x="813.90" y="490.60" width="5.2" height="5.2" fill="#ccff00"/>
<rect x="825.90" y="491.60" width="5.2" height="5.2" fill="#ccff00"/>
<rect x="839.70" y="492.90" width="5.2" height="5.2" fill="#ccff00"/>
<rect x="849.60" y="492.90" width="5.2" height="5.2" fill="#ccff00"/>
<rect x="859.70" y="492.90" width="5.2" height="5.2" fill="#ccff00"/>
<rect x="870.80" y="492.90" width="5.2" height="5.2" fill="#ccff00"/>
<rect x="880.10" y="492.90" width="5.2" height="5.2" fill="#ccff00"/>
<rect x="889.80" y="492.90" width="5.2" height="5.2" fill="#ccff00"/>
<rect x="899.90" y="492.90" width="5.2" height="5.2" fill="#ccff00"/>
<rect x="912.70" y="491.60" width="5.2" height="5.2" fill="#ccff00"/>
<rect x="917.90" y="491.60" width="5.2" height="5.2" fill="#ccff00"/>
<rect x="932.70" y="492.90" width="5.2" height="5.2" fill="#ccff00"/>
<rect x="941.90" y="491.60" width="5.2" height="5.2" fill="#ccff00"/>
<rect x="948.60" y="491.60" width="5.2" height="5.2" fill="#ccff00"/>
<rect x="961.80" y="491.60" width="5.2" height="5.2" fill="#ccff00"/>
<rect x="975.10" y="489.30" width="5.2" height="5.2" fill="#ccff00"/>
<rect x="981.80" y="490.70" width="5.2" height="5.2" fill="#ccff00"/>
<rect x="1001.90" y="491.70" width="5.2" height="5.2" fill="#ccff00"/>
</svg></body></html>
